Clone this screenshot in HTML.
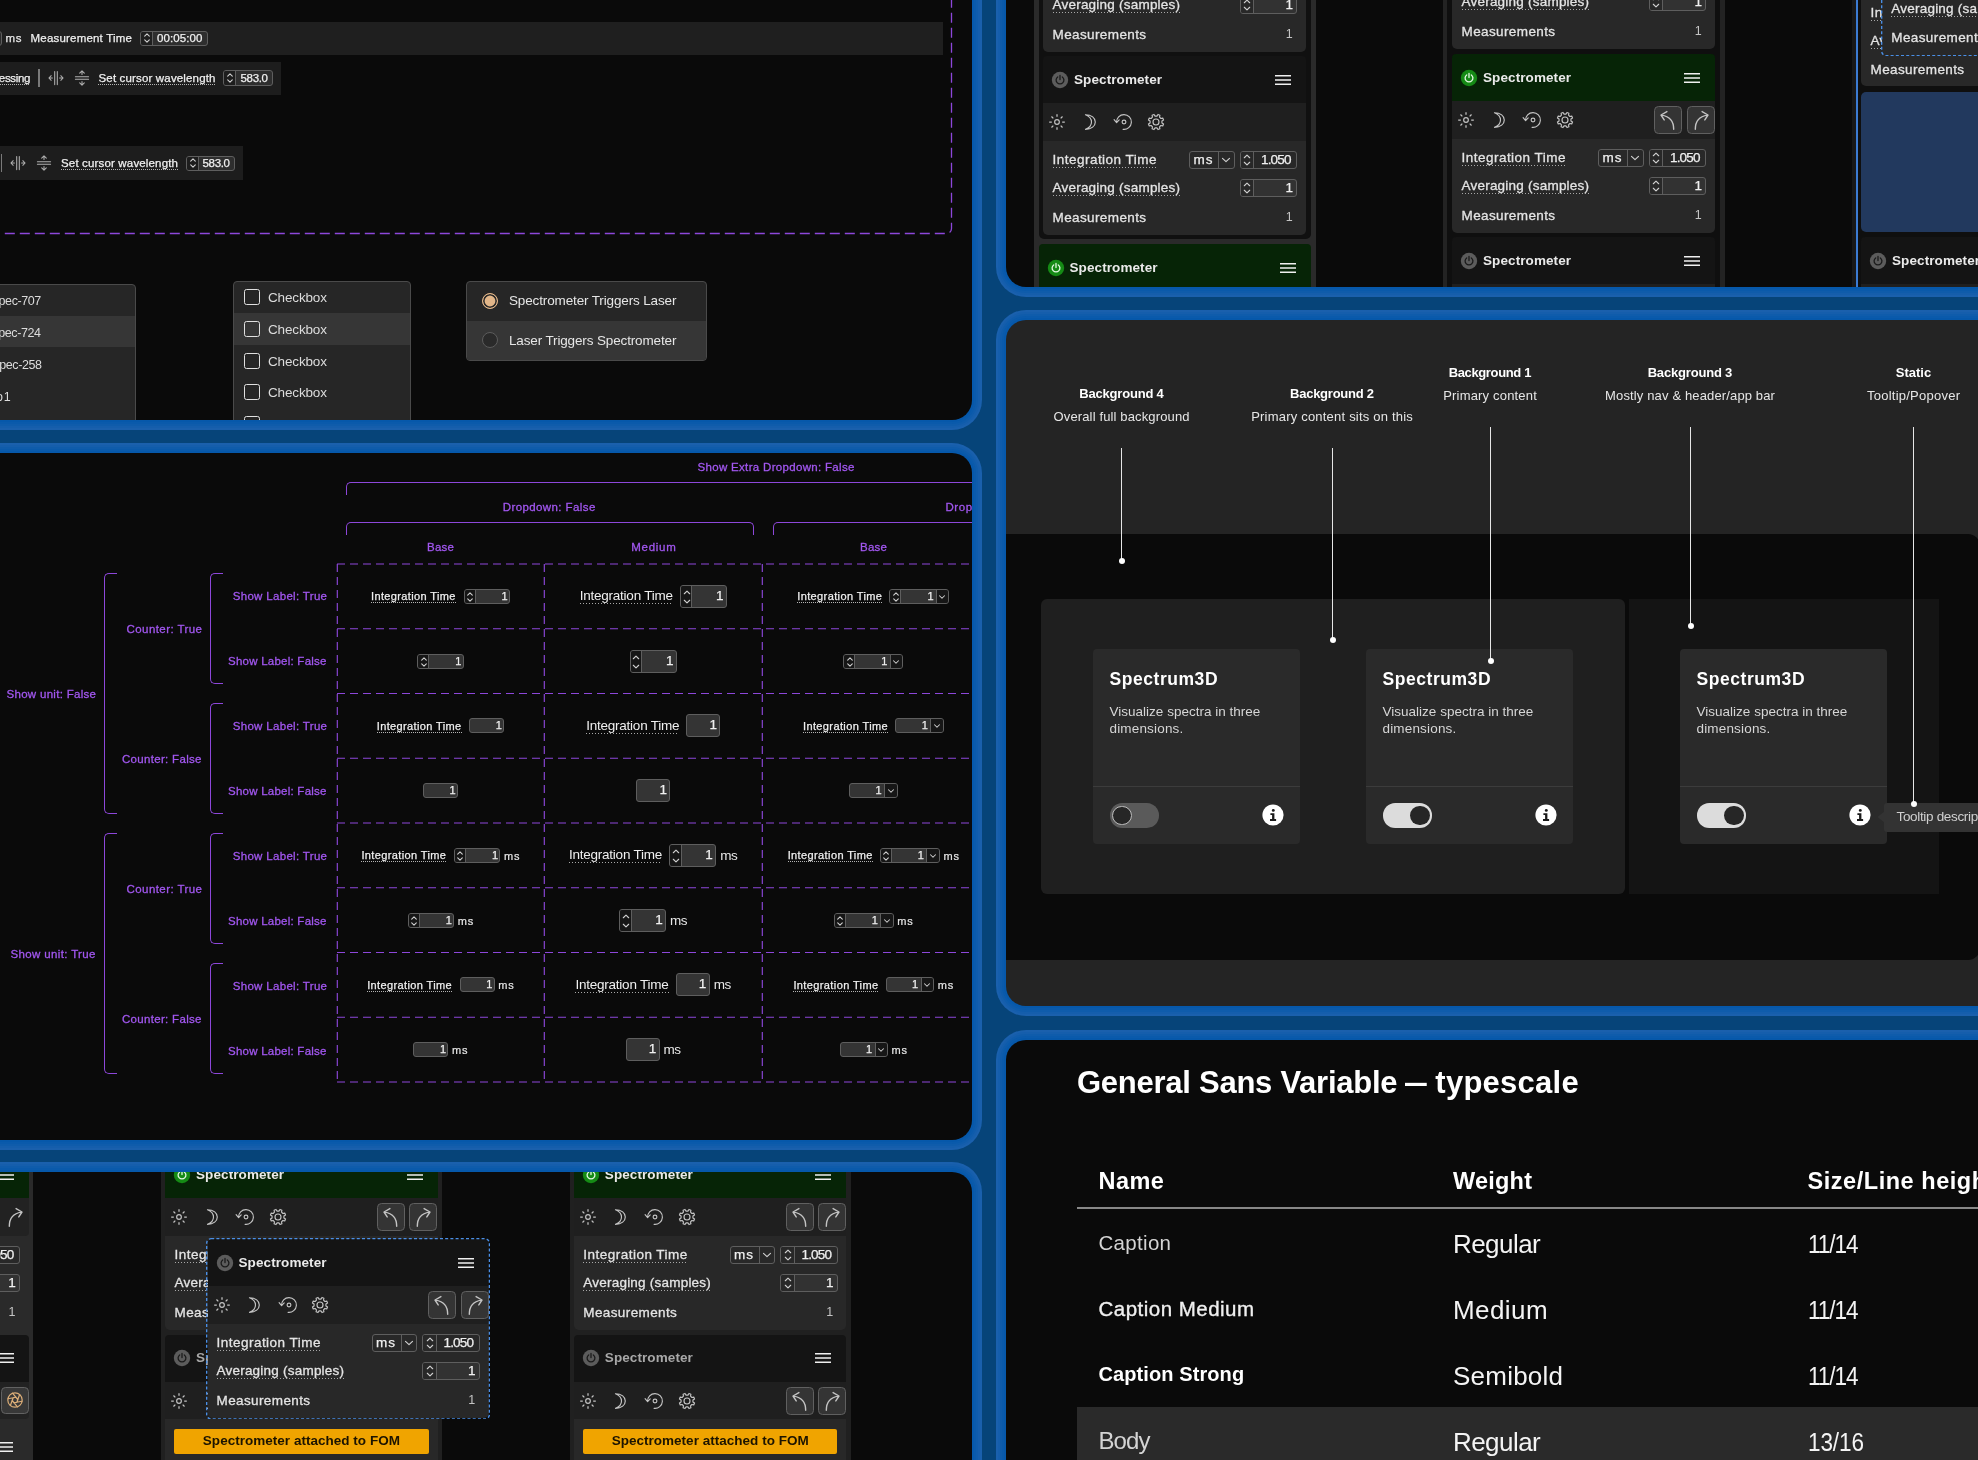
<!DOCTYPE html><html lang="en"><head><meta charset="utf-8"><title>Spectrometer UI kit</title><style>
html,body{margin:0;padding:0;}
body{width:1978px;height:1460px;overflow:hidden;background:#064479;position:relative;
font-family:"Liberation Sans",sans-serif;-webkit-font-smoothing:antialiased;}
.b{position:absolute;box-sizing:border-box;display:block;}
.t{position:absolute;white-space:nowrap;display:block;}
.p{position:absolute;box-sizing:border-box;overflow:hidden;border-radius:20px;}
.c{position:absolute;width:1978px;height:1460px;will-change:transform;}
</style></head><body><div class="p" style="left:-30px;top:-30px;width:1002px;height:450px;background:#0a0a0a;box-shadow:0 0 0 2px #0658aa,0 0 0 4px #0a5aab,0 0 0 6px #0f5cab,0 0 0 8px #155eac,0 0 0 10px #1a60ad;"><div class="c" style="left:30px;top:30px;"><svg class="b" style="left:-30px;top:-30px;" width="1000" height="280" viewBox="0 0 1000 280"><rect x="0.5" y="0.5" width="981" height="263" rx="5" fill="none" stroke="#8d47da" stroke-width="1.3" stroke-dasharray="10 5" stroke-dashoffset="4"/></svg><div class="b" style="left:-10px;top:21.5px;width:953px;height:33.7px;background:#1f1f1f;"></div><div class="b" style="left:-20px;top:31px;width:21.5px;height:15.2px;background:#2c2c2c;border-radius:3px;border:1px solid #5e5e5e;"></div><span class="t" style="left:5.5px;top:31.48px;font-size:11.5px;line-height:15px;color:#e8e8e8;-webkit-text-stroke:0.25px;letter-spacing:0.67px;">ms</span><span class="t" style="left:30.5px;top:31.48px;font-size:11.5px;line-height:15px;color:#f0f0f0;-webkit-text-stroke:0.25px;letter-spacing:0.2px;">Measurement Time</span><div class="b" style="left:140px;top:30.7px;width:67.5px;height:15.5px;background:#2e2e2e;border-radius:3px;border:1px solid #5e5e5e;"></div><div class="b" style="left:141px;top:31.7px;width:11.5px;height:13.5px;background:#1f1f1f;border-radius:2px 0 0 2px;border-right:1px solid #5e5e5e;"></div><svg class="b" style="left:138.55px;top:30.45px;" width="16" height="16" viewBox="-8 -8 16 16"><path d="M-2.3 -1.85L0 -4.15L2.3 -1.85M-2.3 1.85L0 4.15L2.3 1.85" stroke="#d0d0d0" stroke-width="1.1" fill="none" stroke-linecap="round" stroke-linejoin="round"/></svg><span class="t" style="left:157px;top:30.93px;font-size:11.5px;line-height:15px;color:#f0f0f0;-webkit-text-stroke:0.25px;letter-spacing:0.1px;">00:05:00</span><div class="b" style="left:-10px;top:61.5px;width:291px;height:33.3px;background:#1d1d1d;"></div><span class="t" style="left:-23.5px;top:70.98px;font-size:11.5px;line-height:15px;color:#f0f0f0;-webkit-text-stroke:0.25px;letter-spacing:-0.32px;">Processing</span><div class="b" style="left:-24px;top:84px;width:54px;height:1px;background:repeating-linear-gradient(90deg,#b4b4b4 0 1px,transparent 1px 2px);"></div><div class="b" style="left:38.4px;top:69px;width:1.4px;height:18px;background:#7a7a7a;"></div><svg class="b" style="left:44px;top:66.4px;" width="24" height="24" viewBox="-12 -12 24 24"><path d="M-1.3 -6.6V6.6M1.3 -6.6V6.6M-3.6 0H-7M-4.8 -2.3L-7.1 0L-4.8 2.3M3.6 0H7M4.8 -2.3L7.1 0L4.8 2.3" stroke="#b0b0b0" stroke-width="1.05" fill="none" stroke-linecap="round" stroke-linejoin="round"/></svg><svg class="b" style="left:69.7px;top:66.4px;" width="24" height="24" viewBox="-12 -12 24 24"><path d="M-1.3 -6.6V6.6M1.3 -6.6V6.6M-3.6 0H-7M-4.8 -2.3L-7.1 0L-4.8 2.3M3.6 0H7M4.8 -2.3L7.1 0L4.8 2.3" stroke="#b0b0b0" stroke-width="1.05" fill="none" stroke-linecap="round" stroke-linejoin="round" transform="rotate(90)"/></svg><span class="t" style="left:98.5px;top:70.98px;font-size:11.5px;line-height:15px;color:#f0f0f0;-webkit-text-stroke:0.25px;letter-spacing:0.16px;">Set cursor wavelength</span><div class="b" style="left:98px;top:84px;width:117px;height:1px;background:repeating-linear-gradient(90deg,#b4b4b4 0 1px,transparent 1px 2px);"></div><div class="b" style="left:223px;top:70.3px;width:50px;height:15.7px;background:#2e2e2e;border-radius:3px;border:1px solid #5e5e5e;"></div><div class="b" style="left:224px;top:71.3px;width:11.5px;height:13.7px;background:#1d1d1d;border-radius:2px 0 0 2px;border-right:1px solid #5e5e5e;"></div><svg class="b" style="left:221.55px;top:70.15px;" width="16" height="16" viewBox="-8 -8 16 16"><path d="M-2.3 -1.85L0 -4.15L2.3 -1.85M-2.3 1.85L0 4.15L2.3 1.85" stroke="#d0d0d0" stroke-width="1.1" fill="none" stroke-linecap="round" stroke-linejoin="round"/></svg><span class="t" style="left:240.5px;top:70.63px;font-size:11.5px;line-height:15px;color:#f0f0f0;-webkit-text-stroke:0.25px;letter-spacing:-0.32px;">583.0</span><div class="b" style="left:-10px;top:146.4px;width:253px;height:33.2px;background:#1d1d1d;"></div><div class="b" style="left:0.9px;top:154px;width:1.4px;height:18px;background:#7a7a7a;"></div><svg class="b" style="left:6.3px;top:151.4px;" width="24" height="24" viewBox="-12 -12 24 24"><path d="M-1.3 -6.6V6.6M1.3 -6.6V6.6M-3.6 0H-7M-4.8 -2.3L-7.1 0L-4.8 2.3M3.6 0H7M4.8 -2.3L7.1 0L4.8 2.3" stroke="#b0b0b0" stroke-width="1.05" fill="none" stroke-linecap="round" stroke-linejoin="round"/></svg><svg class="b" style="left:32px;top:151.4px;" width="24" height="24" viewBox="-12 -12 24 24"><path d="M-1.3 -6.6V6.6M1.3 -6.6V6.6M-3.6 0H-7M-4.8 -2.3L-7.1 0L-4.8 2.3M3.6 0H7M4.8 -2.3L7.1 0L4.8 2.3" stroke="#b0b0b0" stroke-width="1.05" fill="none" stroke-linecap="round" stroke-linejoin="round" transform="rotate(90)"/></svg><span class="t" style="left:61px;top:155.98px;font-size:11.5px;line-height:15px;color:#f0f0f0;-webkit-text-stroke:0.25px;letter-spacing:0.16px;">Set cursor wavelength</span><div class="b" style="left:61px;top:169px;width:117px;height:1px;background:repeating-linear-gradient(90deg,#b4b4b4 0 1px,transparent 1px 2px);"></div><div class="b" style="left:186px;top:155.5px;width:49px;height:15.7px;background:#2e2e2e;border-radius:3px;border:1px solid #5e5e5e;"></div><div class="b" style="left:187px;top:156.5px;width:11.5px;height:13.7px;background:#1d1d1d;border-radius:2px 0 0 2px;border-right:1px solid #5e5e5e;"></div><svg class="b" style="left:184.55px;top:155.35px;" width="16" height="16" viewBox="-8 -8 16 16"><path d="M-2.3 -1.85L0 -4.15L2.3 -1.85M-2.3 1.85L0 4.15L2.3 1.85" stroke="#d0d0d0" stroke-width="1.1" fill="none" stroke-linecap="round" stroke-linejoin="round"/></svg><span class="t" style="left:202.5px;top:155.83px;font-size:11.5px;line-height:15px;color:#f0f0f0;-webkit-text-stroke:0.25px;letter-spacing:-0.32px;">583.0</span><div class="b" style="left:-10px;top:284px;width:145.5px;height:170px;background:#262626;border-radius:4px;border:1px solid #4a4a4a;"></div><div class="b" style="left:-10px;top:315.8px;width:144.5px;height:31.7px;background:#363636;"></div><span class="t" style="left:-9.41px;top:293.48px;font-size:12.5px;line-height:16px;color:#dcdcdc;letter-spacing:-0.4px;">Spec-707</span><span class="t" style="left:-9.71px;top:325.18px;font-size:12.5px;line-height:16px;color:#dcdcdc;letter-spacing:-0.4px;">Spec-724</span><span class="t" style="left:-8.71px;top:356.88px;font-size:12.5px;line-height:16px;color:#dcdcdc;letter-spacing:-0.4px;">Spec-258</span><span class="t" style="left:-29.24px;top:388.58px;font-size:12.5px;line-height:16px;color:#dcdcdc;letter-spacing:-0.4px;">Demo</span><span class="t" style="left:3.65px;top:388.58px;font-size:12.5px;line-height:16px;color:#dcdcdc;">1</span><div class="b" style="left:232.5px;top:281px;width:178px;height:170px;background:#262626;border-radius:4px;border:1px solid #4a4a4a;"></div><div class="b" style="left:233.5px;top:313px;width:176px;height:31.7px;background:#363636;"></div><div class="b" style="left:244px;top:289.3px;width:16px;height:16px;border-radius:2.5px;border:1.5px solid #e0e0e0;"></div><span class="t" style="left:268px;top:289.38px;font-size:13.5px;line-height:18px;color:#dcdcdc;letter-spacing:-0.15px;">Checkbox</span><div class="b" style="left:244px;top:321px;width:16px;height:16px;border-radius:2.5px;border:1.5px solid #e0e0e0;"></div><span class="t" style="left:268px;top:321.08px;font-size:13.5px;line-height:18px;color:#dcdcdc;letter-spacing:-0.15px;">Checkbox</span><div class="b" style="left:244px;top:352.7px;width:16px;height:16px;border-radius:2.5px;border:1.5px solid #e0e0e0;"></div><span class="t" style="left:268px;top:352.78px;font-size:13.5px;line-height:18px;color:#dcdcdc;letter-spacing:-0.15px;">Checkbox</span><div class="b" style="left:244px;top:384.4px;width:16px;height:16px;border-radius:2.5px;border:1.5px solid #e0e0e0;"></div><span class="t" style="left:268px;top:384.48px;font-size:13.5px;line-height:18px;color:#dcdcdc;letter-spacing:-0.15px;">Checkbox</span><div class="b" style="left:244px;top:416.1px;width:16px;height:16px;border-radius:2.5px;border:1.5px solid #e0e0e0;"></div><span class="t" style="left:268px;top:416.18px;font-size:13.5px;line-height:18px;color:#dcdcdc;letter-spacing:-0.15px;">Checkbox</span><div class="b" style="left:466px;top:281px;width:241px;height:79.5px;background:#262626;border-radius:4px;border:1px solid #4a4a4a;"></div><div class="b" style="left:467px;top:320.5px;width:239px;height:39px;background:#363636;border-radius:0 0 3px 3px;"></div><div class="b" style="left:482px;top:292.5px;width:16px;height:16px;background:#e2b689;border-radius:8px;border:1.3px solid #e2b689;box-shadow:inset 0 0 0 1.6px #262626;"></div><div class="b" style="left:482px;top:332px;width:16px;height:16px;background:#2a2a2a;border-radius:8px;border:1.3px solid #5c5c5c;"></div><span class="t" style="left:509px;top:292.38px;font-size:13.5px;line-height:18px;color:#e6e6e6;letter-spacing:-0.14px;">Spectrometer Triggers Laser</span><span class="t" style="left:509px;top:331.88px;font-size:13.5px;line-height:18px;color:#e6e6e6;letter-spacing:-0.14px;">Laser Triggers Spectrometer</span></div></div><div class="p" style="left:-30px;top:453px;width:1002px;height:686.5px;background:#0a0a0a;box-shadow:0 0 0 2px #0658aa,0 0 0 4px #0a5aab,0 0 0 6px #0f5cab,0 0 0 8px #155eac,0 0 0 10px #1a60ad;"><div class="c" style="left:30px;top:-453px;"><span class="t" style="left:697.5px;top:459.68px;font-size:11.5px;line-height:15px;color:#a257f0;-webkit-text-stroke:0.3px;letter-spacing:0.32px;">Show Extra Dropdown: False</span><div class="b" style="left:346px;top:482px;width:754px;height:13px;border-radius:5px 0 0 0;border:1.2px solid #8d47da;border-bottom:none;border-right:none;"></div><span class="t" style="left:502.75px;top:499.68px;font-size:11.5px;line-height:15px;color:#a257f0;-webkit-text-stroke:0.3px;letter-spacing:0.4px;">Dropdown: False</span><div class="b" style="left:346px;top:522px;width:407.5px;height:13px;border-radius:5px 5px 0 0;border:1.2px solid #8d47da;border-bottom:none;"></div><div class="b" style="left:773px;top:522px;width:427px;height:13px;border-radius:5px 5px 0 0;border:1.2px solid #8d47da;border-bottom:none;"></div><span class="t" style="left:945.5px;top:499.68px;font-size:11.5px;line-height:15px;color:#a257f0;-webkit-text-stroke:0.3px;letter-spacing:0.55px;">Dropdown: True</span><span class="t" style="left:427px;top:539.68px;font-size:11.5px;line-height:15px;color:#a257f0;-webkit-text-stroke:0.3px;letter-spacing:0.26px;">Base</span><span class="t" style="left:631.25px;top:539.68px;font-size:11.5px;line-height:15px;color:#a257f0;-webkit-text-stroke:0.3px;letter-spacing:0.72px;">Medium</span><span class="t" style="left:860px;top:539.68px;font-size:11.5px;line-height:15px;color:#a257f0;-webkit-text-stroke:0.3px;letter-spacing:0.26px;">Base</span><svg class="b" style="left:0px;top:0px;" width="1000" height="1100" viewBox="0 0 1000 1100"><path d="M337 564H1000M337 628.75H1000M337 693.5H1000M337 758.25H1000M337 823H1000M337 887.75H1000M337 952.5H1000M337 1017.25H1000M337 1082H1000M337.3 564V1082M544.3 564V1082M762.3 564V1082" fill="none" stroke="#8d47da" stroke-width="1.15" stroke-dasharray="8 5"/></svg><div class="b" style="left:103.9px;top:573px;width:13px;height:240.5px;border-radius:5px 0 0 5px;border:1.2px solid #8d47da;border-right:none;"></div><span class="t" style="left:6.5px;top:686.78px;font-size:11.5px;line-height:15px;color:#a257f0;-webkit-text-stroke:0.3px;letter-spacing:0.3px;">Show unit: False</span><div class="b" style="left:209.5px;top:573px;width:13px;height:110.5px;border-radius:5px 0 0 5px;border:1.2px solid #8d47da;border-right:none;"></div><span class="t" style="left:126.5px;top:622.28px;font-size:11.5px;line-height:15px;color:#a257f0;-webkit-text-stroke:0.3px;letter-spacing:0.43px;">Counter: True</span><span class="t" style="left:232.7px;top:589.08px;font-size:11.5px;line-height:15px;color:#a257f0;-webkit-text-stroke:0.3px;letter-spacing:0.32px;">Show Label: True</span><span class="t" style="left:228px;top:653.98px;font-size:11.5px;line-height:15px;color:#a257f0;-webkit-text-stroke:0.3px;letter-spacing:0.24px;">Show Label: False</span><div class="b" style="left:209.5px;top:703px;width:13px;height:110.5px;border-radius:5px 0 0 5px;border:1.2px solid #8d47da;border-right:none;"></div><span class="t" style="left:122px;top:752.28px;font-size:11.5px;line-height:15px;color:#a257f0;-webkit-text-stroke:0.3px;letter-spacing:0.31px;">Counter: False</span><span class="t" style="left:232.7px;top:719.08px;font-size:11.5px;line-height:15px;color:#a257f0;-webkit-text-stroke:0.3px;letter-spacing:0.32px;">Show Label: True</span><span class="t" style="left:228px;top:783.98px;font-size:11.5px;line-height:15px;color:#a257f0;-webkit-text-stroke:0.3px;letter-spacing:0.24px;">Show Label: False</span><div class="b" style="left:103.9px;top:833px;width:13px;height:240.5px;border-radius:5px 0 0 5px;border:1.2px solid #8d47da;border-right:none;"></div><span class="t" style="left:10.5px;top:946.78px;font-size:11.5px;line-height:15px;color:#a257f0;-webkit-text-stroke:0.3px;letter-spacing:0.36px;">Show unit: True</span><div class="b" style="left:209.5px;top:833px;width:13px;height:110.5px;border-radius:5px 0 0 5px;border:1.2px solid #8d47da;border-right:none;"></div><span class="t" style="left:126.5px;top:882.28px;font-size:11.5px;line-height:15px;color:#a257f0;-webkit-text-stroke:0.3px;letter-spacing:0.43px;">Counter: True</span><span class="t" style="left:232.7px;top:849.08px;font-size:11.5px;line-height:15px;color:#a257f0;-webkit-text-stroke:0.3px;letter-spacing:0.32px;">Show Label: True</span><span class="t" style="left:228px;top:913.98px;font-size:11.5px;line-height:15px;color:#a257f0;-webkit-text-stroke:0.3px;letter-spacing:0.24px;">Show Label: False</span><div class="b" style="left:209.5px;top:963px;width:13px;height:110.5px;border-radius:5px 0 0 5px;border:1.2px solid #8d47da;border-right:none;"></div><span class="t" style="left:122px;top:1012.28px;font-size:11.5px;line-height:15px;color:#a257f0;-webkit-text-stroke:0.3px;letter-spacing:0.31px;">Counter: False</span><span class="t" style="left:232.7px;top:979.08px;font-size:11.5px;line-height:15px;color:#a257f0;-webkit-text-stroke:0.3px;letter-spacing:0.32px;">Show Label: True</span><span class="t" style="left:228px;top:1043.98px;font-size:11.5px;line-height:15px;color:#a257f0;-webkit-text-stroke:0.3px;letter-spacing:0.24px;">Show Label: False</span><span class="t" style="left:371px;top:589.28px;font-size:11px;line-height:14px;color:#f0f0f0;-webkit-text-stroke:0.25px;letter-spacing:0.37px;">Integration Time</span><div class="b" style="left:371px;top:602px;width:84.5px;height:1px;background:repeating-linear-gradient(90deg,#b4b4b4 0 1px,transparent 1px 2px);"></div><div class="b" style="left:463.5px;top:589px;width:46.5px;height:15px;background:#343434;border-radius:3px;border:1px solid #5e5e5e;"></div><div class="b" style="left:464.5px;top:590px;width:11px;height:13px;background:#161616;border-radius:2px 0 0 2px;border-right:1px solid #5e5e5e;"></div><svg class="b" style="left:461.8px;top:588.5px;" width="16" height="16" viewBox="-8 -8 16 16"><path d="M-2.3 -1.85L0 -4.15L2.3 -1.85M-2.3 1.85L0 4.15L2.3 1.85" stroke="#d0d0d0" stroke-width="1.1" fill="none" stroke-linecap="round" stroke-linejoin="round"/></svg><span class="t" style="left:501.48px;top:589.48px;font-size:11px;line-height:14px;color:#f0f0f0;-webkit-text-stroke:0.25px;">1</span><span class="t" style="left:579.65px;top:587.28px;font-size:13.5px;line-height:18px;color:#f0f0f0;letter-spacing:-0.23px;">Integration Time</span><div class="b" style="left:579.65px;top:603.36px;width:93.3px;height:1px;background:repeating-linear-gradient(90deg,#a8a8a8 0 1.3px,transparent 1.3px 3px);"></div><div class="b" style="left:679.95px;top:585px;width:47px;height:23px;background:#343434;border-radius:3px;border:1px solid #5e5e5e;"></div><div class="b" style="left:680.95px;top:586px;width:11.5px;height:21px;background:#161616;border-radius:2px 0 0 2px;border-right:1px solid #5e5e5e;"></div><svg class="b" style="left:678.5px;top:588.5px;" width="16" height="16" viewBox="-8 -8 16 16"><path d="M-2.7 -3.25L0 -5.95L2.7 -3.25M-2.7 3.25L0 5.95L2.7 3.25" stroke="#d0d0d0" stroke-width="1.1" fill="none" stroke-linecap="round" stroke-linejoin="round"/></svg><span class="t" style="left:716.04px;top:587.48px;font-size:13.5px;line-height:18px;color:#f0f0f0;-webkit-text-stroke:0.25px;">1</span><span class="t" style="left:797.2px;top:589.28px;font-size:11px;line-height:14px;color:#f0f0f0;-webkit-text-stroke:0.25px;letter-spacing:0.39px;">Integration Time</span><div class="b" style="left:797px;top:602px;width:84.7px;height:1px;background:repeating-linear-gradient(90deg,#b4b4b4 0 1px,transparent 1px 2px);"></div><div class="b" style="left:889.4px;top:589px;width:60px;height:15px;background:#343434;border-radius:3px;border:1px solid #5e5e5e;"></div><div class="b" style="left:890.4px;top:590px;width:11px;height:13px;background:#161616;border-radius:2px 0 0 2px;border-right:1px solid #5e5e5e;"></div><svg class="b" style="left:887.7px;top:588.5px;" width="16" height="16" viewBox="-8 -8 16 16"><path d="M-2.3 -1.85L0 -4.15L2.3 -1.85M-2.3 1.85L0 4.15L2.3 1.85" stroke="#d0d0d0" stroke-width="1.1" fill="none" stroke-linecap="round" stroke-linejoin="round"/></svg><div class="b" style="left:935.9px;top:590px;width:12.5px;height:13px;background:#161616;border-radius:0 2px 2px 0;border-left:1px solid #5e5e5e;"></div><svg class="b" style="left:934.45px;top:588.8px;" width="16" height="16" viewBox="-8 -8 16 16"><path d="M-2.5 -1.25L0 1.25L2.5 -1.25" stroke="#d0d0d0" stroke-width="1.05" fill="none" stroke-linecap="round" stroke-linejoin="round"/></svg><span class="t" style="left:927.38px;top:589.48px;font-size:11px;line-height:14px;color:#f0f0f0;-webkit-text-stroke:0.25px;">1</span><div class="b" style="left:417.25px;top:654px;width:46.5px;height:15px;background:#343434;border-radius:3px;border:1px solid #5e5e5e;"></div><div class="b" style="left:418.25px;top:655px;width:11px;height:13px;background:#161616;border-radius:2px 0 0 2px;border-right:1px solid #5e5e5e;"></div><svg class="b" style="left:415.55px;top:653.5px;" width="16" height="16" viewBox="-8 -8 16 16"><path d="M-2.3 -1.85L0 -4.15L2.3 -1.85M-2.3 1.85L0 4.15L2.3 1.85" stroke="#d0d0d0" stroke-width="1.1" fill="none" stroke-linecap="round" stroke-linejoin="round"/></svg><span class="t" style="left:455.23px;top:654.48px;font-size:11px;line-height:14px;color:#f0f0f0;-webkit-text-stroke:0.25px;">1</span><div class="b" style="left:629.8px;top:650px;width:47px;height:23px;background:#343434;border-radius:3px;border:1px solid #5e5e5e;"></div><div class="b" style="left:630.8px;top:651px;width:11.5px;height:21px;background:#161616;border-radius:2px 0 0 2px;border-right:1px solid #5e5e5e;"></div><svg class="b" style="left:628.35px;top:653.5px;" width="16" height="16" viewBox="-8 -8 16 16"><path d="M-2.7 -3.25L0 -5.95L2.7 -3.25M-2.7 3.25L0 5.95L2.7 3.25" stroke="#d0d0d0" stroke-width="1.1" fill="none" stroke-linecap="round" stroke-linejoin="round"/></svg><span class="t" style="left:665.89px;top:652.48px;font-size:13.5px;line-height:18px;color:#f0f0f0;-webkit-text-stroke:0.25px;">1</span><div class="b" style="left:843.3px;top:654px;width:60px;height:15px;background:#343434;border-radius:3px;border:1px solid #5e5e5e;"></div><div class="b" style="left:844.3px;top:655px;width:11px;height:13px;background:#161616;border-radius:2px 0 0 2px;border-right:1px solid #5e5e5e;"></div><svg class="b" style="left:841.6px;top:653.5px;" width="16" height="16" viewBox="-8 -8 16 16"><path d="M-2.3 -1.85L0 -4.15L2.3 -1.85M-2.3 1.85L0 4.15L2.3 1.85" stroke="#d0d0d0" stroke-width="1.1" fill="none" stroke-linecap="round" stroke-linejoin="round"/></svg><div class="b" style="left:889.8px;top:655px;width:12.5px;height:13px;background:#161616;border-radius:0 2px 2px 0;border-left:1px solid #5e5e5e;"></div><svg class="b" style="left:888.35px;top:653.8px;" width="16" height="16" viewBox="-8 -8 16 16"><path d="M-2.5 -1.25L0 1.25L2.5 -1.25" stroke="#d0d0d0" stroke-width="1.05" fill="none" stroke-linecap="round" stroke-linejoin="round"/></svg><span class="t" style="left:881.28px;top:654.48px;font-size:11px;line-height:14px;color:#f0f0f0;-webkit-text-stroke:0.25px;">1</span><span class="t" style="left:376.75px;top:718.78px;font-size:11px;line-height:14px;color:#f0f0f0;-webkit-text-stroke:0.25px;letter-spacing:0.37px;">Integration Time</span><div class="b" style="left:377px;top:732px;width:84.5px;height:1px;background:repeating-linear-gradient(90deg,#b4b4b4 0 1px,transparent 1px 2px);"></div><div class="b" style="left:469.25px;top:718px;width:35px;height:15px;background:#343434;border-radius:3px;border:1px solid #5e5e5e;"></div><span class="t" style="left:495.73px;top:718.48px;font-size:11px;line-height:14px;color:#f0f0f0;-webkit-text-stroke:0.25px;">1</span><span class="t" style="left:586.15px;top:716.78px;font-size:13.5px;line-height:18px;color:#f0f0f0;letter-spacing:-0.23px;">Integration Time</span><div class="b" style="left:586.15px;top:732.86px;width:93.3px;height:1px;background:repeating-linear-gradient(90deg,#a8a8a8 0 1.3px,transparent 1.3px 3px);"></div><div class="b" style="left:686.45px;top:714px;width:34px;height:23px;background:#343434;border-radius:3px;border:1px solid #5e5e5e;"></div><span class="t" style="left:709.54px;top:716.48px;font-size:13.5px;line-height:18px;color:#f0f0f0;-webkit-text-stroke:0.25px;">1</span><span class="t" style="left:802.95px;top:718.78px;font-size:11px;line-height:14px;color:#f0f0f0;-webkit-text-stroke:0.25px;letter-spacing:0.39px;">Integration Time</span><div class="b" style="left:803px;top:732px;width:84.7px;height:1px;background:repeating-linear-gradient(90deg,#b4b4b4 0 1px,transparent 1px 2px);"></div><div class="b" style="left:895.15px;top:718px;width:48.5px;height:15px;background:#343434;border-radius:3px;border:1px solid #5e5e5e;"></div><div class="b" style="left:930.15px;top:719px;width:12.5px;height:13px;background:#161616;border-radius:0 2px 2px 0;border-left:1px solid #5e5e5e;"></div><svg class="b" style="left:928.7px;top:717.8px;" width="16" height="16" viewBox="-8 -8 16 16"><path d="M-2.5 -1.25L0 1.25L2.5 -1.25" stroke="#d0d0d0" stroke-width="1.05" fill="none" stroke-linecap="round" stroke-linejoin="round"/></svg><span class="t" style="left:921.63px;top:718.48px;font-size:11px;line-height:14px;color:#f0f0f0;-webkit-text-stroke:0.25px;">1</span><div class="b" style="left:423px;top:783px;width:35px;height:15px;background:#343434;border-radius:3px;border:1px solid #5e5e5e;"></div><span class="t" style="left:449.48px;top:783.48px;font-size:11px;line-height:14px;color:#f0f0f0;-webkit-text-stroke:0.25px;">1</span><div class="b" style="left:636.3px;top:779px;width:34px;height:23px;background:#343434;border-radius:3px;border:1px solid #5e5e5e;"></div><span class="t" style="left:659.39px;top:781.48px;font-size:13.5px;line-height:18px;color:#f0f0f0;-webkit-text-stroke:0.25px;">1</span><div class="b" style="left:849.05px;top:783px;width:48.5px;height:15px;background:#343434;border-radius:3px;border:1px solid #5e5e5e;"></div><div class="b" style="left:884.05px;top:784px;width:12.5px;height:13px;background:#161616;border-radius:0 2px 2px 0;border-left:1px solid #5e5e5e;"></div><svg class="b" style="left:882.6px;top:782.8px;" width="16" height="16" viewBox="-8 -8 16 16"><path d="M-2.5 -1.25L0 1.25L2.5 -1.25" stroke="#d0d0d0" stroke-width="1.05" fill="none" stroke-linecap="round" stroke-linejoin="round"/></svg><span class="t" style="left:875.53px;top:783.48px;font-size:11px;line-height:14px;color:#f0f0f0;-webkit-text-stroke:0.25px;">1</span><span class="t" style="left:361.45px;top:848.28px;font-size:11px;line-height:14px;color:#f0f0f0;-webkit-text-stroke:0.25px;letter-spacing:0.37px;">Integration Time</span><div class="b" style="left:361px;top:861px;width:84.5px;height:1px;background:repeating-linear-gradient(90deg,#b4b4b4 0 1px,transparent 1px 2px);"></div><div class="b" style="left:453.95px;top:848px;width:46.5px;height:15px;background:#343434;border-radius:3px;border:1px solid #5e5e5e;"></div><div class="b" style="left:454.95px;top:849px;width:11px;height:13px;background:#161616;border-radius:2px 0 0 2px;border-right:1px solid #5e5e5e;"></div><svg class="b" style="left:452.25px;top:847.5px;" width="16" height="16" viewBox="-8 -8 16 16"><path d="M-2.3 -1.85L0 -4.15L2.3 -1.85M-2.3 1.85L0 4.15L2.3 1.85" stroke="#d0d0d0" stroke-width="1.1" fill="none" stroke-linecap="round" stroke-linejoin="round"/></svg><span class="t" style="left:491.93px;top:848.48px;font-size:11px;line-height:14px;color:#f0f0f0;-webkit-text-stroke:0.25px;">1</span><span class="t" style="left:504.05px;top:848.98px;font-size:11px;line-height:14px;color:#e8e8e8;-webkit-text-stroke:0.2px;letter-spacing:0.84px;">ms</span><span class="t" style="left:568.9px;top:846.28px;font-size:13.5px;line-height:18px;color:#f0f0f0;letter-spacing:-0.23px;">Integration Time</span><div class="b" style="left:568.9px;top:862.36px;width:93.3px;height:1px;background:repeating-linear-gradient(90deg,#a8a8a8 0 1.3px,transparent 1.3px 3px);"></div><div class="b" style="left:669.2px;top:844px;width:47px;height:23px;background:#343434;border-radius:3px;border:1px solid #5e5e5e;"></div><div class="b" style="left:670.2px;top:845px;width:11.5px;height:21px;background:#161616;border-radius:2px 0 0 2px;border-right:1px solid #5e5e5e;"></div><svg class="b" style="left:667.75px;top:847.5px;" width="16" height="16" viewBox="-8 -8 16 16"><path d="M-2.7 -3.25L0 -5.95L2.7 -3.25M-2.7 3.25L0 5.95L2.7 3.25" stroke="#d0d0d0" stroke-width="1.1" fill="none" stroke-linecap="round" stroke-linejoin="round"/></svg><span class="t" style="left:705.29px;top:846.48px;font-size:13.5px;line-height:18px;color:#f0f0f0;-webkit-text-stroke:0.25px;">1</span><span class="t" style="left:720.2px;top:846.98px;font-size:13.5px;line-height:18px;color:#e8e8e8;letter-spacing:-0.5px;">ms</span><span class="t" style="left:787.65px;top:848.28px;font-size:11px;line-height:14px;color:#f0f0f0;-webkit-text-stroke:0.25px;letter-spacing:0.39px;">Integration Time</span><div class="b" style="left:788px;top:861px;width:84.7px;height:1px;background:repeating-linear-gradient(90deg,#b4b4b4 0 1px,transparent 1px 2px);"></div><div class="b" style="left:879.85px;top:848px;width:60px;height:15px;background:#343434;border-radius:3px;border:1px solid #5e5e5e;"></div><div class="b" style="left:880.85px;top:849px;width:11px;height:13px;background:#161616;border-radius:2px 0 0 2px;border-right:1px solid #5e5e5e;"></div><svg class="b" style="left:878.15px;top:847.5px;" width="16" height="16" viewBox="-8 -8 16 16"><path d="M-2.3 -1.85L0 -4.15L2.3 -1.85M-2.3 1.85L0 4.15L2.3 1.85" stroke="#d0d0d0" stroke-width="1.1" fill="none" stroke-linecap="round" stroke-linejoin="round"/></svg><div class="b" style="left:926.35px;top:849px;width:12.5px;height:13px;background:#161616;border-radius:0 2px 2px 0;border-left:1px solid #5e5e5e;"></div><svg class="b" style="left:924.9px;top:847.8px;" width="16" height="16" viewBox="-8 -8 16 16"><path d="M-2.5 -1.25L0 1.25L2.5 -1.25" stroke="#d0d0d0" stroke-width="1.05" fill="none" stroke-linecap="round" stroke-linejoin="round"/></svg><span class="t" style="left:917.83px;top:848.48px;font-size:11px;line-height:14px;color:#f0f0f0;-webkit-text-stroke:0.25px;">1</span><span class="t" style="left:943.45px;top:848.98px;font-size:11px;line-height:14px;color:#e8e8e8;-webkit-text-stroke:0.2px;letter-spacing:0.84px;">ms</span><div class="b" style="left:407.7px;top:913px;width:46.5px;height:15px;background:#343434;border-radius:3px;border:1px solid #5e5e5e;"></div><div class="b" style="left:408.7px;top:914px;width:11px;height:13px;background:#161616;border-radius:2px 0 0 2px;border-right:1px solid #5e5e5e;"></div><svg class="b" style="left:406px;top:912.5px;" width="16" height="16" viewBox="-8 -8 16 16"><path d="M-2.3 -1.85L0 -4.15L2.3 -1.85M-2.3 1.85L0 4.15L2.3 1.85" stroke="#d0d0d0" stroke-width="1.1" fill="none" stroke-linecap="round" stroke-linejoin="round"/></svg><span class="t" style="left:445.68px;top:913.48px;font-size:11px;line-height:14px;color:#f0f0f0;-webkit-text-stroke:0.25px;">1</span><span class="t" style="left:457.8px;top:913.73px;font-size:11px;line-height:14px;color:#e8e8e8;-webkit-text-stroke:0.2px;letter-spacing:0.84px;">ms</span><div class="b" style="left:619.05px;top:909px;width:47px;height:23px;background:#343434;border-radius:3px;border:1px solid #5e5e5e;"></div><div class="b" style="left:620.05px;top:910px;width:11.5px;height:21px;background:#161616;border-radius:2px 0 0 2px;border-right:1px solid #5e5e5e;"></div><svg class="b" style="left:617.6px;top:912.5px;" width="16" height="16" viewBox="-8 -8 16 16"><path d="M-2.7 -3.25L0 -5.95L2.7 -3.25M-2.7 3.25L0 5.95L2.7 3.25" stroke="#d0d0d0" stroke-width="1.1" fill="none" stroke-linecap="round" stroke-linejoin="round"/></svg><span class="t" style="left:655.14px;top:911.48px;font-size:13.5px;line-height:18px;color:#f0f0f0;-webkit-text-stroke:0.25px;">1</span><span class="t" style="left:670.05px;top:911.73px;font-size:13.5px;line-height:18px;color:#e8e8e8;letter-spacing:-0.5px;">ms</span><div class="b" style="left:833.75px;top:913px;width:60px;height:15px;background:#343434;border-radius:3px;border:1px solid #5e5e5e;"></div><div class="b" style="left:834.75px;top:914px;width:11px;height:13px;background:#161616;border-radius:2px 0 0 2px;border-right:1px solid #5e5e5e;"></div><svg class="b" style="left:832.05px;top:912.5px;" width="16" height="16" viewBox="-8 -8 16 16"><path d="M-2.3 -1.85L0 -4.15L2.3 -1.85M-2.3 1.85L0 4.15L2.3 1.85" stroke="#d0d0d0" stroke-width="1.1" fill="none" stroke-linecap="round" stroke-linejoin="round"/></svg><div class="b" style="left:880.25px;top:914px;width:12.5px;height:13px;background:#161616;border-radius:0 2px 2px 0;border-left:1px solid #5e5e5e;"></div><svg class="b" style="left:878.8px;top:912.8px;" width="16" height="16" viewBox="-8 -8 16 16"><path d="M-2.5 -1.25L0 1.25L2.5 -1.25" stroke="#d0d0d0" stroke-width="1.05" fill="none" stroke-linecap="round" stroke-linejoin="round"/></svg><span class="t" style="left:871.73px;top:913.48px;font-size:11px;line-height:14px;color:#f0f0f0;-webkit-text-stroke:0.25px;">1</span><span class="t" style="left:897.35px;top:913.73px;font-size:11px;line-height:14px;color:#e8e8e8;-webkit-text-stroke:0.2px;letter-spacing:0.84px;">ms</span><span class="t" style="left:367.2px;top:977.78px;font-size:11px;line-height:14px;color:#f0f0f0;-webkit-text-stroke:0.25px;letter-spacing:0.37px;">Integration Time</span><div class="b" style="left:367px;top:991px;width:84.5px;height:1px;background:repeating-linear-gradient(90deg,#b4b4b4 0 1px,transparent 1px 2px);"></div><div class="b" style="left:459.7px;top:977px;width:35px;height:15px;background:#343434;border-radius:3px;border:1px solid #5e5e5e;"></div><span class="t" style="left:486.18px;top:977.48px;font-size:11px;line-height:14px;color:#f0f0f0;-webkit-text-stroke:0.25px;">1</span><span class="t" style="left:498.3px;top:978.48px;font-size:11px;line-height:14px;color:#e8e8e8;-webkit-text-stroke:0.2px;letter-spacing:0.84px;">ms</span><span class="t" style="left:575.4px;top:975.78px;font-size:13.5px;line-height:18px;color:#f0f0f0;letter-spacing:-0.23px;">Integration Time</span><div class="b" style="left:575.4px;top:991.86px;width:93.3px;height:1px;background:repeating-linear-gradient(90deg,#a8a8a8 0 1.3px,transparent 1.3px 3px);"></div><div class="b" style="left:675.7px;top:973px;width:34px;height:23px;background:#343434;border-radius:3px;border:1px solid #5e5e5e;"></div><span class="t" style="left:698.79px;top:975.48px;font-size:13.5px;line-height:18px;color:#f0f0f0;-webkit-text-stroke:0.25px;">1</span><span class="t" style="left:713.7px;top:976.48px;font-size:13.5px;line-height:18px;color:#e8e8e8;letter-spacing:-0.5px;">ms</span><span class="t" style="left:793.4px;top:977.78px;font-size:11px;line-height:14px;color:#f0f0f0;-webkit-text-stroke:0.25px;letter-spacing:0.39px;">Integration Time</span><div class="b" style="left:793px;top:991px;width:84.7px;height:1px;background:repeating-linear-gradient(90deg,#b4b4b4 0 1px,transparent 1px 2px);"></div><div class="b" style="left:885.6px;top:977px;width:48.5px;height:15px;background:#343434;border-radius:3px;border:1px solid #5e5e5e;"></div><div class="b" style="left:920.6px;top:978px;width:12.5px;height:13px;background:#161616;border-radius:0 2px 2px 0;border-left:1px solid #5e5e5e;"></div><svg class="b" style="left:919.15px;top:976.8px;" width="16" height="16" viewBox="-8 -8 16 16"><path d="M-2.5 -1.25L0 1.25L2.5 -1.25" stroke="#d0d0d0" stroke-width="1.05" fill="none" stroke-linecap="round" stroke-linejoin="round"/></svg><span class="t" style="left:912.08px;top:977.48px;font-size:11px;line-height:14px;color:#f0f0f0;-webkit-text-stroke:0.25px;">1</span><span class="t" style="left:937.7px;top:978.48px;font-size:11px;line-height:14px;color:#e8e8e8;-webkit-text-stroke:0.2px;letter-spacing:0.84px;">ms</span><div class="b" style="left:413.45px;top:1042px;width:35px;height:15px;background:#343434;border-radius:3px;border:1px solid #5e5e5e;"></div><span class="t" style="left:439.93px;top:1042.48px;font-size:11px;line-height:14px;color:#f0f0f0;-webkit-text-stroke:0.25px;">1</span><span class="t" style="left:452.05px;top:1043.23px;font-size:11px;line-height:14px;color:#e8e8e8;-webkit-text-stroke:0.2px;letter-spacing:0.84px;">ms</span><div class="b" style="left:625.55px;top:1038px;width:34px;height:23px;background:#343434;border-radius:3px;border:1px solid #5e5e5e;"></div><span class="t" style="left:648.64px;top:1040.48px;font-size:13.5px;line-height:18px;color:#f0f0f0;-webkit-text-stroke:0.25px;">1</span><span class="t" style="left:663.55px;top:1041.23px;font-size:13.5px;line-height:18px;color:#e8e8e8;letter-spacing:-0.5px;">ms</span><div class="b" style="left:839.5px;top:1042px;width:48.5px;height:15px;background:#343434;border-radius:3px;border:1px solid #5e5e5e;"></div><div class="b" style="left:874.5px;top:1043px;width:12.5px;height:13px;background:#161616;border-radius:0 2px 2px 0;border-left:1px solid #5e5e5e;"></div><svg class="b" style="left:873.05px;top:1041.8px;" width="16" height="16" viewBox="-8 -8 16 16"><path d="M-2.5 -1.25L0 1.25L2.5 -1.25" stroke="#d0d0d0" stroke-width="1.05" fill="none" stroke-linecap="round" stroke-linejoin="round"/></svg><span class="t" style="left:865.98px;top:1042.48px;font-size:11px;line-height:14px;color:#f0f0f0;-webkit-text-stroke:0.25px;">1</span><span class="t" style="left:891.6px;top:1043.23px;font-size:11px;line-height:14px;color:#e8e8e8;-webkit-text-stroke:0.2px;letter-spacing:0.84px;">ms</span></div></div><div class="p" style="left:-30px;top:1172px;width:1002px;height:318px;background:#0a0a0a;box-shadow:0 0 0 2px #0658aa,0 0 0 4px #0a5aab,0 0 0 6px #0f5cab,0 0 0 8px #155eac,0 0 0 10px #1a60ad;"><div class="c" style="left:30px;top:-1172px;"><div class="b" style="left:-260px;top:1160px;width:293.4px;height:320px;background:#2a2a2a;"></div><div class="b" style="left:-244px;top:1151px;width:272.7px;height:47px;background:#062406;border-radius:4px 4px 0 0;"></div><svg class="b" style="left:-238.6px;top:1162.5px;" width="24" height="24" viewBox="-12 -12 24 24"><circle r="8.2" fill="#158a15"/><path d="M-2.3 -3.1A3.9 3.9 0 1 0 2.3 -3.1M0 -4.6V-0.4" fill="none" stroke="#e4f8e4" stroke-width="1.3" stroke-linecap="round"/></svg><span class="t" style="left:-213px;top:1165.98px;font-size:13.5px;line-height:18px;color:#eaeaea;font-weight:700;letter-spacing:0.09px;">Spectrometer</span><svg class="b" style="left:-6.4px;top:1162.7px;" width="24" height="24" viewBox="-12 -12 24 24"><path d="M-8 -4.25H8M-8 0H8M-8 4.25H8" stroke="#f0f0f0" stroke-width="1.6" fill="none"/></svg><div class="b" style="left:-244px;top:1198px;width:272.7px;height:38px;background:#222;border-radius:0 0 4px 4px;"></div><svg class="b" style="left:2.7px;top:1205px;" width="24" height="24" viewBox="-12 -12 24 24"><path d="M5.7 9.2C5.7 2 2 -3.6 -6.4 -4.9M-1.1 -8.4L-7 -5L-3.8 -0.1" fill="none" stroke="#c4c4c4" stroke-width="1.4" stroke-linecap="round" stroke-linejoin="round" transform="scale(-1,1)"/></svg><span class="t" style="left:-234.5px;top:1245.98px;font-size:13.5px;line-height:18px;color:#e4e4e4;-webkit-text-stroke:0.3px;letter-spacing:0.48px;">Integration Time</span><div class="b" style="left:-234.5px;top:1262.06px;width:104px;height:1px;background:repeating-linear-gradient(90deg,#a8a8a8 0 1.3px,transparent 1.3px 3px);"></div><div class="b" style="left:-88.3px;top:1245.7px;width:45.5px;height:18.5px;background:#282828;border-radius:3px;border:1px solid #5e5e5e;"></div><div class="b" style="left:-59.3px;top:1246.7px;width:1px;height:16.5px;background:#5e5e5e;"></div><span class="t" style="left:-83.8px;top:1245.93px;font-size:13.5px;line-height:18px;color:#f0f0f0;-webkit-text-stroke:0.25px;letter-spacing:1px;">ms</span><svg class="b" style="left:-59px;top:1247.35px;" width="16" height="16" viewBox="-8 -8 16 16"><path d="M-3.5 -1.7L0 1.7L3.5 -1.7" stroke="#d0d0d0" stroke-width="1.15" fill="none" stroke-linecap="round" stroke-linejoin="round"/></svg><div class="b" style="left:-37.8px;top:1245.7px;width:57.5px;height:18.5px;background:#282828;border-radius:3px;border:1px solid #5e5e5e;"></div><div class="b" style="left:-36.8px;top:1246.7px;width:13.5px;height:16.5px;background:#282828;border-radius:2px 0 0 2px;border-right:1px solid #5e5e5e;"></div><svg class="b" style="left:-38.25px;top:1246.95px;" width="16" height="16" viewBox="-8 -8 16 16"><path d="M-2.7 -2.25L0 -4.95L2.7 -2.25M-2.7 2.25L0 4.95L2.7 2.25" stroke="#d0d0d0" stroke-width="1.1" fill="none" stroke-linecap="round" stroke-linejoin="round"/></svg><span class="t" style="left:-16.3px;top:1245.93px;font-size:13.5px;line-height:18px;color:#f0f0f0;-webkit-text-stroke:0.25px;letter-spacing:-0.82px;">1.050</span><span class="t" style="left:-234.5px;top:1273.98px;font-size:13.5px;line-height:18px;color:#e4e4e4;-webkit-text-stroke:0.3px;letter-spacing:0.22px;">Averaging (samples)</span><div class="b" style="left:-234.5px;top:1290.06px;width:127.5px;height:1px;background:repeating-linear-gradient(90deg,#a8a8a8 0 1.3px,transparent 1.3px 3px);"></div><div class="b" style="left:-37.8px;top:1273.7px;width:57.5px;height:18.5px;background:#323232;border-radius:3px;border:1px solid #5e5e5e;"></div><div class="b" style="left:-36.8px;top:1274.7px;width:13.5px;height:16.5px;background:#282828;border-radius:2px 0 0 2px;border-right:1px solid #5e5e5e;"></div><svg class="b" style="left:-38.25px;top:1274.95px;" width="16" height="16" viewBox="-8 -8 16 16"><path d="M-2.7 -2.25L0 -4.95L2.7 -2.25M-2.7 2.25L0 4.95L2.7 2.25" stroke="#d0d0d0" stroke-width="1.1" fill="none" stroke-linecap="round" stroke-linejoin="round"/></svg><span class="t" style="left:8.29px;top:1273.93px;font-size:13.5px;line-height:18px;color:#f0f0f0;-webkit-text-stroke:0.25px;">1</span><span class="t" style="left:-234.5px;top:1303.58px;font-size:13.5px;line-height:18px;color:#e4e4e4;-webkit-text-stroke:0.3px;letter-spacing:0.39px;">Measurements</span><span class="t" style="left:8.55px;top:1303.98px;font-size:12.5px;line-height:16px;color:#c4c4c4;">1</span><div class="b" style="left:-244px;top:1334.5px;width:272.7px;height:47px;background:#141414;border-radius:4px 4px 0 0;"></div><svg class="b" style="left:-238.6px;top:1346px;" width="24" height="24" viewBox="-12 -12 24 24"><circle r="8.2" fill="#5c5c5c"/><path d="M-2.3 -3.1A3.9 3.9 0 1 0 2.3 -3.1M0 -4.6V-0.4" fill="none" stroke="#1a1a1a" stroke-width="1.3" stroke-linecap="round"/></svg><span class="t" style="left:-213px;top:1349.48px;font-size:13.5px;line-height:18px;color:#eaeaea;font-weight:700;letter-spacing:0.09px;">Spectrometer</span><svg class="b" style="left:-6.4px;top:1346.2px;" width="24" height="24" viewBox="-12 -12 24 24"><path d="M-8 -4.25H8M-8 0H8M-8 4.25H8" stroke="#f0f0f0" stroke-width="1.6" fill="none"/></svg><div class="b" style="left:-244px;top:1381.5px;width:272.7px;height:37.5px;background:#222;border-radius:0 0 4px 4px;"></div><div class="b" style="left:1px;top:1386.5px;width:27.7px;height:27.7px;background:#383838;border-radius:4.5px;border:1px solid #626262;"></div><svg class="b" style="left:2.8px;top:1388.3px;" width="24" height="24" viewBox="-12 -12 24 24"><circle r="7.2" fill="none" stroke="#dcae78" stroke-width="1.2"/><path d="M7.09 1.25L-1.27 2.72M2.46 6.77L-2.99 0.26M-4.63 5.52L-1.72 -2.46M-7.09 -1.25L1.27 -2.72M-2.46 -6.77L2.99 -0.26M4.63 -5.52L1.72 2.46" stroke="#dcae78" stroke-width="1.2" fill="none" stroke-linecap="round"/></svg><svg class="b" style="left:-6.8px;top:1435px;" width="24" height="24" viewBox="-12 -12 24 24"><path d="M-8 -4.25H8M-8 0H8M-8 4.25H8" stroke="#f0f0f0" stroke-width="1.6" fill="none"/></svg><div class="b" style="left:160.7px;top:1160px;width:281.3px;height:320px;background:#202020;"></div><div class="b" style="left:165px;top:1151px;width:272.7px;height:47px;background:#062406;border-radius:4px 4px 0 0;"></div><svg class="b" style="left:170.4px;top:1162.5px;" width="24" height="24" viewBox="-12 -12 24 24"><circle r="8.2" fill="#158a15"/><path d="M-2.3 -3.1A3.9 3.9 0 1 0 2.3 -3.1M0 -4.6V-0.4" fill="none" stroke="#e4f8e4" stroke-width="1.3" stroke-linecap="round"/></svg><span class="t" style="left:196px;top:1165.98px;font-size:13.5px;line-height:18px;color:#eaeaea;font-weight:700;letter-spacing:0.09px;">Spectrometer</span><svg class="b" style="left:402.6px;top:1162.7px;" width="24" height="24" viewBox="-12 -12 24 24"><path d="M-8 -4.25H8M-8 0H8M-8 4.25H8" stroke="#f0f0f0" stroke-width="1.6" fill="none"/></svg><div class="b" style="left:165px;top:1198px;width:272.7px;height:37.5px;background:#1f1f1f;"></div><svg class="b" style="left:167px;top:1205px;" width="24" height="24" viewBox="-12 -12 24 24"><circle r="2.35" fill="none" stroke="#c4c4c4" stroke-width="1.15"/><path d="M5.2 0L7.8 0M3.68 3.68L5.52 5.52M0 5.2L0 7.8M-3.68 3.68L-5.52 5.52M-5.2 0L-7.8 0M-3.68 -3.68L-5.52 -5.52M0 -5.2L0 -7.8M3.68 -3.68L5.52 -5.52" stroke="#c4c4c4" stroke-width="1.25" stroke-linecap="butt" fill="none"/></svg><svg class="b" style="left:199.6px;top:1205px;" width="24" height="24" viewBox="-12 -12 24 24"><path d="M-4.5 -7.3C1.6 -7.3 5.3 -4 5.3 0C5.3 4 1.6 7.3 -4.5 7.3C-0.4 5.7 1.5 3 1.5 0C1.5 -3 -0.4 -5.7 -4.5 -7.3Z" fill="none" stroke="#c4c4c4" stroke-width="1.15" stroke-linejoin="round"/></svg><svg class="b" style="left:234px;top:1205px;" width="24" height="24" viewBox="-12 -12 24 24"><path d="M-7.4 0.4A7.4 7.4 0 1 1 -0.9 7.34M-9.9 -2.3L-7.4 0.6L-4.8 -2.1" fill="none" stroke="#c4c4c4" stroke-width="1.15" stroke-linecap="round" stroke-linejoin="round"/><circle r="1.9" fill="none" stroke="#c4c4c4" stroke-width="1.15"/></svg><svg class="b" style="left:265.9px;top:1205px;" width="24" height="24" viewBox="-12 -12 24 24"><path d="M5.83 -1.4L7.73 -1.04L7.73 1.04L5.83 1.4L5.12 3.13L6.2 4.73L4.73 6.2L3.13 5.12L1.4 5.83L1.04 7.73L-1.04 7.73L-1.4 5.83L-3.13 5.12L-4.73 6.2L-6.2 4.73L-5.12 3.13L-5.83 1.4L-7.73 1.04L-7.73 -1.04L-5.83 -1.4L-5.12 -3.13L-6.2 -4.73L-4.73 -6.2L-3.13 -5.12L-1.4 -5.83L-1.04 -7.73L1.04 -7.73L1.4 -5.83L3.13 -5.12L4.73 -6.2L6.2 -4.73L5.12 -3.13Z" fill="none" stroke="#c4c4c4" stroke-width="1.15" stroke-linejoin="round" transform="rotate(22.5)"/><circle r="3" fill="none" stroke="#c4c4c4" stroke-width="1.15"/></svg><div class="b" style="left:376.7px;top:1203px;width:28px;height:28px;background:#343434;border-radius:4.5px;border:1px solid #606060;"></div><svg class="b" style="left:378.7px;top:1205px;" width="24" height="24" viewBox="-12 -12 24 24"><path d="M5.7 9.2C5.7 2 2 -3.6 -6.4 -4.9M-1.1 -8.4L-7 -5L-3.8 -0.1" fill="none" stroke="#c4c4c4" stroke-width="1.4" stroke-linecap="round" stroke-linejoin="round"/></svg><div class="b" style="left:409.2px;top:1203px;width:28px;height:28px;background:#343434;border-radius:4.5px;border:1px solid #606060;"></div><svg class="b" style="left:411.2px;top:1205px;" width="24" height="24" viewBox="-12 -12 24 24"><path d="M5.7 9.2C5.7 2 2 -3.6 -6.4 -4.9M-1.1 -8.4L-7 -5L-3.8 -0.1" fill="none" stroke="#c4c4c4" stroke-width="1.4" stroke-linecap="round" stroke-linejoin="round" transform="scale(-1,1)"/></svg><div class="b" style="left:165px;top:1235.5px;width:272.7px;height:94px;background:#282828;border-radius:0 0 5px 5px;"></div><span class="t" style="left:174.5px;top:1245.98px;font-size:13.5px;line-height:18px;color:#e4e4e4;-webkit-text-stroke:0.3px;letter-spacing:0.48px;">Integration Time</span><div class="b" style="left:174.5px;top:1262.06px;width:104px;height:1px;background:repeating-linear-gradient(90deg,#a8a8a8 0 1.3px,transparent 1.3px 3px);"></div><div class="b" style="left:320.7px;top:1245.7px;width:45.5px;height:18.5px;background:#282828;border-radius:3px;border:1px solid #5e5e5e;"></div><div class="b" style="left:349.7px;top:1246.7px;width:1px;height:16.5px;background:#5e5e5e;"></div><span class="t" style="left:325.2px;top:1245.93px;font-size:13.5px;line-height:18px;color:#f0f0f0;-webkit-text-stroke:0.25px;letter-spacing:1px;">ms</span><svg class="b" style="left:350px;top:1247.35px;" width="16" height="16" viewBox="-8 -8 16 16"><path d="M-3.5 -1.7L0 1.7L3.5 -1.7" stroke="#d0d0d0" stroke-width="1.15" fill="none" stroke-linecap="round" stroke-linejoin="round"/></svg><div class="b" style="left:371.2px;top:1245.7px;width:57.5px;height:18.5px;background:#282828;border-radius:3px;border:1px solid #5e5e5e;"></div><div class="b" style="left:372.2px;top:1246.7px;width:13.5px;height:16.5px;background:#282828;border-radius:2px 0 0 2px;border-right:1px solid #5e5e5e;"></div><svg class="b" style="left:370.75px;top:1246.95px;" width="16" height="16" viewBox="-8 -8 16 16"><path d="M-2.7 -2.25L0 -4.95L2.7 -2.25M-2.7 2.25L0 4.95L2.7 2.25" stroke="#d0d0d0" stroke-width="1.1" fill="none" stroke-linecap="round" stroke-linejoin="round"/></svg><span class="t" style="left:392.7px;top:1245.93px;font-size:13.5px;line-height:18px;color:#f0f0f0;-webkit-text-stroke:0.25px;letter-spacing:-0.82px;">1.050</span><span class="t" style="left:174.5px;top:1273.98px;font-size:13.5px;line-height:18px;color:#e4e4e4;-webkit-text-stroke:0.3px;letter-spacing:0.22px;">Averaging (samples)</span><div class="b" style="left:174.5px;top:1290.06px;width:127.5px;height:1px;background:repeating-linear-gradient(90deg,#a8a8a8 0 1.3px,transparent 1.3px 3px);"></div><div class="b" style="left:371.2px;top:1273.7px;width:57.5px;height:18.5px;background:#323232;border-radius:3px;border:1px solid #5e5e5e;"></div><div class="b" style="left:372.2px;top:1274.7px;width:13.5px;height:16.5px;background:#282828;border-radius:2px 0 0 2px;border-right:1px solid #5e5e5e;"></div><svg class="b" style="left:370.75px;top:1274.95px;" width="16" height="16" viewBox="-8 -8 16 16"><path d="M-2.7 -2.25L0 -4.95L2.7 -2.25M-2.7 2.25L0 4.95L2.7 2.25" stroke="#d0d0d0" stroke-width="1.1" fill="none" stroke-linecap="round" stroke-linejoin="round"/></svg><span class="t" style="left:417.29px;top:1273.93px;font-size:13.5px;line-height:18px;color:#f0f0f0;-webkit-text-stroke:0.25px;">1</span><span class="t" style="left:174.5px;top:1303.58px;font-size:13.5px;line-height:18px;color:#e4e4e4;-webkit-text-stroke:0.3px;letter-spacing:0.39px;">Measurements</span><span class="t" style="left:417.55px;top:1303.98px;font-size:12.5px;line-height:16px;color:#c4c4c4;">1</span><div class="b" style="left:165px;top:1334.5px;width:272.7px;height:47px;background:#141414;border-radius:4px 4px 0 0;"></div><svg class="b" style="left:170.4px;top:1346px;" width="24" height="24" viewBox="-12 -12 24 24"><circle r="8.2" fill="#5c5c5c"/><path d="M-2.3 -3.1A3.9 3.9 0 1 0 2.3 -3.1M0 -4.6V-0.4" fill="none" stroke="#1a1a1a" stroke-width="1.3" stroke-linecap="round"/></svg><span class="t" style="left:196px;top:1349.48px;font-size:13.5px;line-height:18px;color:#a8a8a8;font-weight:700;letter-spacing:0.09px;">Spectrometer</span><svg class="b" style="left:402.6px;top:1346.2px;" width="24" height="24" viewBox="-12 -12 24 24"><path d="M-8 -4.25H8M-8 0H8M-8 4.25H8" stroke="#f0f0f0" stroke-width="1.6" fill="none"/></svg><div class="b" style="left:165px;top:1381.5px;width:272.7px;height:37.5px;background:#1f1f1f;"></div><svg class="b" style="left:167px;top:1388.5px;" width="24" height="24" viewBox="-12 -12 24 24"><circle r="2.35" fill="none" stroke="#c4c4c4" stroke-width="1.15"/><path d="M5.2 0L7.8 0M3.68 3.68L5.52 5.52M0 5.2L0 7.8M-3.68 3.68L-5.52 5.52M-5.2 0L-7.8 0M-3.68 -3.68L-5.52 -5.52M0 -5.2L0 -7.8M3.68 -3.68L5.52 -5.52" stroke="#c4c4c4" stroke-width="1.25" stroke-linecap="butt" fill="none"/></svg><svg class="b" style="left:199.6px;top:1388.5px;" width="24" height="24" viewBox="-12 -12 24 24"><path d="M-4.5 -7.3C1.6 -7.3 5.3 -4 5.3 0C5.3 4 1.6 7.3 -4.5 7.3C-0.4 5.7 1.5 3 1.5 0C1.5 -3 -0.4 -5.7 -4.5 -7.3Z" fill="none" stroke="#c4c4c4" stroke-width="1.15" stroke-linejoin="round"/></svg><svg class="b" style="left:234px;top:1388.5px;" width="24" height="24" viewBox="-12 -12 24 24"><path d="M-7.4 0.4A7.4 7.4 0 1 1 -0.9 7.34M-9.9 -2.3L-7.4 0.6L-4.8 -2.1" fill="none" stroke="#c4c4c4" stroke-width="1.15" stroke-linecap="round" stroke-linejoin="round"/><circle r="1.9" fill="none" stroke="#c4c4c4" stroke-width="1.15"/></svg><svg class="b" style="left:265.9px;top:1388.5px;" width="24" height="24" viewBox="-12 -12 24 24"><path d="M5.83 -1.4L7.73 -1.04L7.73 1.04L5.83 1.4L5.12 3.13L6.2 4.73L4.73 6.2L3.13 5.12L1.4 5.83L1.04 7.73L-1.04 7.73L-1.4 5.83L-3.13 5.12L-4.73 6.2L-6.2 4.73L-5.12 3.13L-5.83 1.4L-7.73 1.04L-7.73 -1.04L-5.83 -1.4L-5.12 -3.13L-6.2 -4.73L-4.73 -6.2L-3.13 -5.12L-1.4 -5.83L-1.04 -7.73L1.04 -7.73L1.4 -5.83L3.13 -5.12L4.73 -6.2L6.2 -4.73L5.12 -3.13Z" fill="none" stroke="#c4c4c4" stroke-width="1.15" stroke-linejoin="round" transform="rotate(22.5)"/><circle r="3" fill="none" stroke="#c4c4c4" stroke-width="1.15"/></svg><div class="b" style="left:376.7px;top:1386.5px;width:28px;height:28px;background:#343434;border-radius:4.5px;border:1px solid #606060;"></div><svg class="b" style="left:378.7px;top:1388.5px;" width="24" height="24" viewBox="-12 -12 24 24"><path d="M5.7 9.2C5.7 2 2 -3.6 -6.4 -4.9M-1.1 -8.4L-7 -5L-3.8 -0.1" fill="none" stroke="#c4c4c4" stroke-width="1.4" stroke-linecap="round" stroke-linejoin="round"/></svg><div class="b" style="left:409.2px;top:1386.5px;width:28px;height:28px;background:#343434;border-radius:4.5px;border:1px solid #606060;"></div><svg class="b" style="left:411.2px;top:1388.5px;" width="24" height="24" viewBox="-12 -12 24 24"><path d="M5.7 9.2C5.7 2 2 -3.6 -6.4 -4.9M-1.1 -8.4L-7 -5L-3.8 -0.1" fill="none" stroke="#c4c4c4" stroke-width="1.4" stroke-linecap="round" stroke-linejoin="round" transform="scale(-1,1)"/></svg><div class="b" style="left:165px;top:1419px;width:272.7px;height:94px;background:#282828;border-radius:0 0 5px 5px;"></div><div class="b" style="left:174px;top:1428.5px;width:254.7px;height:25.5px;background:#f0a400;border-radius:2px;"></div><span class="t" style="left:202.85px;top:1432.48px;font-size:13.5px;line-height:18px;color:#1c1400;font-weight:700;letter-spacing:0.02px;">Spectrometer attached to FOM</span><div class="b" style="left:569.5px;top:1160px;width:281.5px;height:320px;background:#202020;"></div><div class="b" style="left:573.8px;top:1151px;width:272.7px;height:47px;background:#062406;border-radius:4px 4px 0 0;"></div><svg class="b" style="left:579.2px;top:1162.5px;" width="24" height="24" viewBox="-12 -12 24 24"><circle r="8.2" fill="#158a15"/><path d="M-2.3 -3.1A3.9 3.9 0 1 0 2.3 -3.1M0 -4.6V-0.4" fill="none" stroke="#e4f8e4" stroke-width="1.3" stroke-linecap="round"/></svg><span class="t" style="left:604.8px;top:1165.98px;font-size:13.5px;line-height:18px;color:#eaeaea;font-weight:700;letter-spacing:0.09px;">Spectrometer</span><svg class="b" style="left:811.4px;top:1162.7px;" width="24" height="24" viewBox="-12 -12 24 24"><path d="M-8 -4.25H8M-8 0H8M-8 4.25H8" stroke="#f0f0f0" stroke-width="1.6" fill="none"/></svg><div class="b" style="left:573.8px;top:1198px;width:272.7px;height:37.5px;background:#1f1f1f;"></div><svg class="b" style="left:575.8px;top:1205px;" width="24" height="24" viewBox="-12 -12 24 24"><circle r="2.35" fill="none" stroke="#c4c4c4" stroke-width="1.15"/><path d="M5.2 0L7.8 0M3.68 3.68L5.52 5.52M0 5.2L0 7.8M-3.68 3.68L-5.52 5.52M-5.2 0L-7.8 0M-3.68 -3.68L-5.52 -5.52M0 -5.2L0 -7.8M3.68 -3.68L5.52 -5.52" stroke="#c4c4c4" stroke-width="1.25" stroke-linecap="butt" fill="none"/></svg><svg class="b" style="left:608.4px;top:1205px;" width="24" height="24" viewBox="-12 -12 24 24"><path d="M-4.5 -7.3C1.6 -7.3 5.3 -4 5.3 0C5.3 4 1.6 7.3 -4.5 7.3C-0.4 5.7 1.5 3 1.5 0C1.5 -3 -0.4 -5.7 -4.5 -7.3Z" fill="none" stroke="#c4c4c4" stroke-width="1.15" stroke-linejoin="round"/></svg><svg class="b" style="left:642.8px;top:1205px;" width="24" height="24" viewBox="-12 -12 24 24"><path d="M-7.4 0.4A7.4 7.4 0 1 1 -0.9 7.34M-9.9 -2.3L-7.4 0.6L-4.8 -2.1" fill="none" stroke="#c4c4c4" stroke-width="1.15" stroke-linecap="round" stroke-linejoin="round"/><circle r="1.9" fill="none" stroke="#c4c4c4" stroke-width="1.15"/></svg><svg class="b" style="left:674.7px;top:1205px;" width="24" height="24" viewBox="-12 -12 24 24"><path d="M5.83 -1.4L7.73 -1.04L7.73 1.04L5.83 1.4L5.12 3.13L6.2 4.73L4.73 6.2L3.13 5.12L1.4 5.83L1.04 7.73L-1.04 7.73L-1.4 5.83L-3.13 5.12L-4.73 6.2L-6.2 4.73L-5.12 3.13L-5.83 1.4L-7.73 1.04L-7.73 -1.04L-5.83 -1.4L-5.12 -3.13L-6.2 -4.73L-4.73 -6.2L-3.13 -5.12L-1.4 -5.83L-1.04 -7.73L1.04 -7.73L1.4 -5.83L3.13 -5.12L4.73 -6.2L6.2 -4.73L5.12 -3.13Z" fill="none" stroke="#c4c4c4" stroke-width="1.15" stroke-linejoin="round" transform="rotate(22.5)"/><circle r="3" fill="none" stroke="#c4c4c4" stroke-width="1.15"/></svg><div class="b" style="left:785.5px;top:1203px;width:28px;height:28px;background:#343434;border-radius:4.5px;border:1px solid #606060;"></div><svg class="b" style="left:787.5px;top:1205px;" width="24" height="24" viewBox="-12 -12 24 24"><path d="M5.7 9.2C5.7 2 2 -3.6 -6.4 -4.9M-1.1 -8.4L-7 -5L-3.8 -0.1" fill="none" stroke="#c4c4c4" stroke-width="1.4" stroke-linecap="round" stroke-linejoin="round"/></svg><div class="b" style="left:818px;top:1203px;width:28px;height:28px;background:#343434;border-radius:4.5px;border:1px solid #606060;"></div><svg class="b" style="left:820px;top:1205px;" width="24" height="24" viewBox="-12 -12 24 24"><path d="M5.7 9.2C5.7 2 2 -3.6 -6.4 -4.9M-1.1 -8.4L-7 -5L-3.8 -0.1" fill="none" stroke="#c4c4c4" stroke-width="1.4" stroke-linecap="round" stroke-linejoin="round" transform="scale(-1,1)"/></svg><div class="b" style="left:573.8px;top:1235.5px;width:272.7px;height:94px;background:#282828;border-radius:0 0 5px 5px;"></div><span class="t" style="left:583.3px;top:1245.98px;font-size:13.5px;line-height:18px;color:#e4e4e4;-webkit-text-stroke:0.3px;letter-spacing:0.48px;">Integration Time</span><div class="b" style="left:583.3px;top:1262.06px;width:104px;height:1px;background:repeating-linear-gradient(90deg,#a8a8a8 0 1.3px,transparent 1.3px 3px);"></div><div class="b" style="left:729.5px;top:1245.7px;width:45.5px;height:18.5px;background:#282828;border-radius:3px;border:1px solid #5e5e5e;"></div><div class="b" style="left:758.5px;top:1246.7px;width:1px;height:16.5px;background:#5e5e5e;"></div><span class="t" style="left:734px;top:1245.93px;font-size:13.5px;line-height:18px;color:#f0f0f0;-webkit-text-stroke:0.25px;letter-spacing:1px;">ms</span><svg class="b" style="left:758.8px;top:1247.35px;" width="16" height="16" viewBox="-8 -8 16 16"><path d="M-3.5 -1.7L0 1.7L3.5 -1.7" stroke="#d0d0d0" stroke-width="1.15" fill="none" stroke-linecap="round" stroke-linejoin="round"/></svg><div class="b" style="left:780px;top:1245.7px;width:57.5px;height:18.5px;background:#282828;border-radius:3px;border:1px solid #5e5e5e;"></div><div class="b" style="left:781px;top:1246.7px;width:13.5px;height:16.5px;background:#282828;border-radius:2px 0 0 2px;border-right:1px solid #5e5e5e;"></div><svg class="b" style="left:779.55px;top:1246.95px;" width="16" height="16" viewBox="-8 -8 16 16"><path d="M-2.7 -2.25L0 -4.95L2.7 -2.25M-2.7 2.25L0 4.95L2.7 2.25" stroke="#d0d0d0" stroke-width="1.1" fill="none" stroke-linecap="round" stroke-linejoin="round"/></svg><span class="t" style="left:801.5px;top:1245.93px;font-size:13.5px;line-height:18px;color:#f0f0f0;-webkit-text-stroke:0.25px;letter-spacing:-0.82px;">1.050</span><span class="t" style="left:583.3px;top:1273.98px;font-size:13.5px;line-height:18px;color:#e4e4e4;-webkit-text-stroke:0.3px;letter-spacing:0.22px;">Averaging (samples)</span><div class="b" style="left:583.3px;top:1290.06px;width:127.5px;height:1px;background:repeating-linear-gradient(90deg,#a8a8a8 0 1.3px,transparent 1.3px 3px);"></div><div class="b" style="left:780px;top:1273.7px;width:57.5px;height:18.5px;background:#323232;border-radius:3px;border:1px solid #5e5e5e;"></div><div class="b" style="left:781px;top:1274.7px;width:13.5px;height:16.5px;background:#282828;border-radius:2px 0 0 2px;border-right:1px solid #5e5e5e;"></div><svg class="b" style="left:779.55px;top:1274.95px;" width="16" height="16" viewBox="-8 -8 16 16"><path d="M-2.7 -2.25L0 -4.95L2.7 -2.25M-2.7 2.25L0 4.95L2.7 2.25" stroke="#d0d0d0" stroke-width="1.1" fill="none" stroke-linecap="round" stroke-linejoin="round"/></svg><span class="t" style="left:826.09px;top:1273.93px;font-size:13.5px;line-height:18px;color:#f0f0f0;-webkit-text-stroke:0.25px;">1</span><span class="t" style="left:583.3px;top:1303.58px;font-size:13.5px;line-height:18px;color:#e4e4e4;-webkit-text-stroke:0.3px;letter-spacing:0.39px;">Measurements</span><span class="t" style="left:826.35px;top:1303.98px;font-size:12.5px;line-height:16px;color:#c4c4c4;">1</span><div class="b" style="left:573.8px;top:1334.5px;width:272.7px;height:47px;background:#141414;border-radius:4px 4px 0 0;"></div><svg class="b" style="left:579.2px;top:1346px;" width="24" height="24" viewBox="-12 -12 24 24"><circle r="8.2" fill="#5c5c5c"/><path d="M-2.3 -3.1A3.9 3.9 0 1 0 2.3 -3.1M0 -4.6V-0.4" fill="none" stroke="#1a1a1a" stroke-width="1.3" stroke-linecap="round"/></svg><span class="t" style="left:604.8px;top:1349.48px;font-size:13.5px;line-height:18px;color:#a8a8a8;font-weight:700;letter-spacing:0.09px;">Spectrometer</span><svg class="b" style="left:811.4px;top:1346.2px;" width="24" height="24" viewBox="-12 -12 24 24"><path d="M-8 -4.25H8M-8 0H8M-8 4.25H8" stroke="#f0f0f0" stroke-width="1.6" fill="none"/></svg><div class="b" style="left:573.8px;top:1381.5px;width:272.7px;height:37.5px;background:#1f1f1f;"></div><svg class="b" style="left:575.8px;top:1388.5px;" width="24" height="24" viewBox="-12 -12 24 24"><circle r="2.35" fill="none" stroke="#c4c4c4" stroke-width="1.15"/><path d="M5.2 0L7.8 0M3.68 3.68L5.52 5.52M0 5.2L0 7.8M-3.68 3.68L-5.52 5.52M-5.2 0L-7.8 0M-3.68 -3.68L-5.52 -5.52M0 -5.2L0 -7.8M3.68 -3.68L5.52 -5.52" stroke="#c4c4c4" stroke-width="1.25" stroke-linecap="butt" fill="none"/></svg><svg class="b" style="left:608.4px;top:1388.5px;" width="24" height="24" viewBox="-12 -12 24 24"><path d="M-4.5 -7.3C1.6 -7.3 5.3 -4 5.3 0C5.3 4 1.6 7.3 -4.5 7.3C-0.4 5.7 1.5 3 1.5 0C1.5 -3 -0.4 -5.7 -4.5 -7.3Z" fill="none" stroke="#c4c4c4" stroke-width="1.15" stroke-linejoin="round"/></svg><svg class="b" style="left:642.8px;top:1388.5px;" width="24" height="24" viewBox="-12 -12 24 24"><path d="M-7.4 0.4A7.4 7.4 0 1 1 -0.9 7.34M-9.9 -2.3L-7.4 0.6L-4.8 -2.1" fill="none" stroke="#c4c4c4" stroke-width="1.15" stroke-linecap="round" stroke-linejoin="round"/><circle r="1.9" fill="none" stroke="#c4c4c4" stroke-width="1.15"/></svg><svg class="b" style="left:674.7px;top:1388.5px;" width="24" height="24" viewBox="-12 -12 24 24"><path d="M5.83 -1.4L7.73 -1.04L7.73 1.04L5.83 1.4L5.12 3.13L6.2 4.73L4.73 6.2L3.13 5.12L1.4 5.83L1.04 7.73L-1.04 7.73L-1.4 5.83L-3.13 5.12L-4.73 6.2L-6.2 4.73L-5.12 3.13L-5.83 1.4L-7.73 1.04L-7.73 -1.04L-5.83 -1.4L-5.12 -3.13L-6.2 -4.73L-4.73 -6.2L-3.13 -5.12L-1.4 -5.83L-1.04 -7.73L1.04 -7.73L1.4 -5.83L3.13 -5.12L4.73 -6.2L6.2 -4.73L5.12 -3.13Z" fill="none" stroke="#c4c4c4" stroke-width="1.15" stroke-linejoin="round" transform="rotate(22.5)"/><circle r="3" fill="none" stroke="#c4c4c4" stroke-width="1.15"/></svg><div class="b" style="left:785.5px;top:1386.5px;width:28px;height:28px;background:#343434;border-radius:4.5px;border:1px solid #606060;"></div><svg class="b" style="left:787.5px;top:1388.5px;" width="24" height="24" viewBox="-12 -12 24 24"><path d="M5.7 9.2C5.7 2 2 -3.6 -6.4 -4.9M-1.1 -8.4L-7 -5L-3.8 -0.1" fill="none" stroke="#c4c4c4" stroke-width="1.4" stroke-linecap="round" stroke-linejoin="round"/></svg><div class="b" style="left:818px;top:1386.5px;width:28px;height:28px;background:#343434;border-radius:4.5px;border:1px solid #606060;"></div><svg class="b" style="left:820px;top:1388.5px;" width="24" height="24" viewBox="-12 -12 24 24"><path d="M5.7 9.2C5.7 2 2 -3.6 -6.4 -4.9M-1.1 -8.4L-7 -5L-3.8 -0.1" fill="none" stroke="#c4c4c4" stroke-width="1.4" stroke-linecap="round" stroke-linejoin="round" transform="scale(-1,1)"/></svg><div class="b" style="left:573.8px;top:1419px;width:272.7px;height:94px;background:#282828;border-radius:0 0 5px 5px;"></div><div class="b" style="left:582.8px;top:1428.5px;width:254.7px;height:25.5px;background:#f0a400;border-radius:2px;"></div><span class="t" style="left:611.65px;top:1432.48px;font-size:13.5px;line-height:18px;color:#1c1400;font-weight:700;letter-spacing:0.02px;">Spectrometer attached to FOM</span><div class="b" style="left:207.5px;top:1239px;width:281.5px;height:179px;background:#282828;border-radius:5px;"></div><div class="b" style="left:207.5px;top:1239px;width:281.5px;height:47px;background:#141414;border-radius:4px 4px 0 0;"></div><svg class="b" style="left:212.9px;top:1250.5px;" width="24" height="24" viewBox="-12 -12 24 24"><circle r="8.2" fill="#5c5c5c"/><path d="M-2.3 -3.1A3.9 3.9 0 1 0 2.3 -3.1M0 -4.6V-0.4" fill="none" stroke="#1a1a1a" stroke-width="1.3" stroke-linecap="round"/></svg><span class="t" style="left:238.5px;top:1253.98px;font-size:13.5px;line-height:18px;color:#eaeaea;font-weight:700;letter-spacing:0.09px;">Spectrometer</span><svg class="b" style="left:453.9px;top:1250.7px;" width="24" height="24" viewBox="-12 -12 24 24"><path d="M-8 -4.25H8M-8 0H8M-8 4.25H8" stroke="#f0f0f0" stroke-width="1.6" fill="none"/></svg><div class="b" style="left:207.5px;top:1286px;width:281.5px;height:37.5px;background:#1f1f1f;"></div><svg class="b" style="left:209.5px;top:1293px;" width="24" height="24" viewBox="-12 -12 24 24"><circle r="2.35" fill="none" stroke="#c4c4c4" stroke-width="1.15"/><path d="M5.2 0L7.8 0M3.68 3.68L5.52 5.52M0 5.2L0 7.8M-3.68 3.68L-5.52 5.52M-5.2 0L-7.8 0M-3.68 -3.68L-5.52 -5.52M0 -5.2L0 -7.8M3.68 -3.68L5.52 -5.52" stroke="#c4c4c4" stroke-width="1.25" stroke-linecap="butt" fill="none"/></svg><svg class="b" style="left:242.1px;top:1293px;" width="24" height="24" viewBox="-12 -12 24 24"><path d="M-4.5 -7.3C1.6 -7.3 5.3 -4 5.3 0C5.3 4 1.6 7.3 -4.5 7.3C-0.4 5.7 1.5 3 1.5 0C1.5 -3 -0.4 -5.7 -4.5 -7.3Z" fill="none" stroke="#c4c4c4" stroke-width="1.15" stroke-linejoin="round"/></svg><svg class="b" style="left:276.5px;top:1293px;" width="24" height="24" viewBox="-12 -12 24 24"><path d="M-7.4 0.4A7.4 7.4 0 1 1 -0.9 7.34M-9.9 -2.3L-7.4 0.6L-4.8 -2.1" fill="none" stroke="#c4c4c4" stroke-width="1.15" stroke-linecap="round" stroke-linejoin="round"/><circle r="1.9" fill="none" stroke="#c4c4c4" stroke-width="1.15"/></svg><svg class="b" style="left:308.4px;top:1293px;" width="24" height="24" viewBox="-12 -12 24 24"><path d="M5.83 -1.4L7.73 -1.04L7.73 1.04L5.83 1.4L5.12 3.13L6.2 4.73L4.73 6.2L3.13 5.12L1.4 5.83L1.04 7.73L-1.04 7.73L-1.4 5.83L-3.13 5.12L-4.73 6.2L-6.2 4.73L-5.12 3.13L-5.83 1.4L-7.73 1.04L-7.73 -1.04L-5.83 -1.4L-5.12 -3.13L-6.2 -4.73L-4.73 -6.2L-3.13 -5.12L-1.4 -5.83L-1.04 -7.73L1.04 -7.73L1.4 -5.83L3.13 -5.12L4.73 -6.2L6.2 -4.73L5.12 -3.13Z" fill="none" stroke="#c4c4c4" stroke-width="1.15" stroke-linejoin="round" transform="rotate(22.5)"/><circle r="3" fill="none" stroke="#c4c4c4" stroke-width="1.15"/></svg><div class="b" style="left:428px;top:1291px;width:28px;height:28px;background:#343434;border-radius:4.5px;border:1px solid #606060;"></div><svg class="b" style="left:430px;top:1293px;" width="24" height="24" viewBox="-12 -12 24 24"><path d="M5.7 9.2C5.7 2 2 -3.6 -6.4 -4.9M-1.1 -8.4L-7 -5L-3.8 -0.1" fill="none" stroke="#c4c4c4" stroke-width="1.4" stroke-linecap="round" stroke-linejoin="round"/></svg><div class="b" style="left:460.5px;top:1291px;width:28px;height:28px;background:#343434;border-radius:4.5px;border:1px solid #606060;"></div><svg class="b" style="left:462.5px;top:1293px;" width="24" height="24" viewBox="-12 -12 24 24"><path d="M5.7 9.2C5.7 2 2 -3.6 -6.4 -4.9M-1.1 -8.4L-7 -5L-3.8 -0.1" fill="none" stroke="#c4c4c4" stroke-width="1.4" stroke-linecap="round" stroke-linejoin="round" transform="scale(-1,1)"/></svg><span class="t" style="left:216.5px;top:1333.98px;font-size:13.5px;line-height:18px;color:#e4e4e4;-webkit-text-stroke:0.3px;letter-spacing:0.48px;">Integration Time</span><div class="b" style="left:216.5px;top:1350.06px;width:104px;height:1px;background:repeating-linear-gradient(90deg,#a8a8a8 0 1.3px,transparent 1.3px 3px);"></div><div class="b" style="left:371.5px;top:1333.7px;width:45.5px;height:18.5px;background:#282828;border-radius:3px;border:1px solid #5e5e5e;"></div><div class="b" style="left:400.5px;top:1334.7px;width:1px;height:16.5px;background:#5e5e5e;"></div><span class="t" style="left:376px;top:1333.93px;font-size:13.5px;line-height:18px;color:#f0f0f0;-webkit-text-stroke:0.25px;letter-spacing:1px;">ms</span><svg class="b" style="left:400.8px;top:1335.35px;" width="16" height="16" viewBox="-8 -8 16 16"><path d="M-3.5 -1.7L0 1.7L3.5 -1.7" stroke="#d0d0d0" stroke-width="1.15" fill="none" stroke-linecap="round" stroke-linejoin="round"/></svg><div class="b" style="left:422px;top:1333.7px;width:57.5px;height:18.5px;background:#282828;border-radius:3px;border:1px solid #5e5e5e;"></div><div class="b" style="left:423px;top:1334.7px;width:13.5px;height:16.5px;background:#282828;border-radius:2px 0 0 2px;border-right:1px solid #5e5e5e;"></div><svg class="b" style="left:421.55px;top:1334.95px;" width="16" height="16" viewBox="-8 -8 16 16"><path d="M-2.7 -2.25L0 -4.95L2.7 -2.25M-2.7 2.25L0 4.95L2.7 2.25" stroke="#d0d0d0" stroke-width="1.1" fill="none" stroke-linecap="round" stroke-linejoin="round"/></svg><span class="t" style="left:443.5px;top:1333.93px;font-size:13.5px;line-height:18px;color:#f0f0f0;-webkit-text-stroke:0.25px;letter-spacing:-0.82px;">1.050</span><span class="t" style="left:216.5px;top:1361.98px;font-size:13.5px;line-height:18px;color:#e4e4e4;-webkit-text-stroke:0.3px;letter-spacing:0.22px;">Averaging (samples)</span><div class="b" style="left:216.5px;top:1378.06px;width:127.5px;height:1px;background:repeating-linear-gradient(90deg,#a8a8a8 0 1.3px,transparent 1.3px 3px);"></div><div class="b" style="left:422px;top:1361.7px;width:57.5px;height:18.5px;background:#323232;border-radius:3px;border:1px solid #5e5e5e;"></div><div class="b" style="left:423px;top:1362.7px;width:13.5px;height:16.5px;background:#282828;border-radius:2px 0 0 2px;border-right:1px solid #5e5e5e;"></div><svg class="b" style="left:421.55px;top:1362.95px;" width="16" height="16" viewBox="-8 -8 16 16"><path d="M-2.7 -2.25L0 -4.95L2.7 -2.25M-2.7 2.25L0 4.95L2.7 2.25" stroke="#d0d0d0" stroke-width="1.1" fill="none" stroke-linecap="round" stroke-linejoin="round"/></svg><span class="t" style="left:468.09px;top:1361.93px;font-size:13.5px;line-height:18px;color:#f0f0f0;-webkit-text-stroke:0.25px;">1</span><span class="t" style="left:216.5px;top:1391.58px;font-size:13.5px;line-height:18px;color:#e4e4e4;-webkit-text-stroke:0.3px;letter-spacing:0.39px;">Measurements</span><span class="t" style="left:468.35px;top:1391.98px;font-size:12.5px;line-height:16px;color:#c4c4c4;">1</span><svg class="b" style="left:206.2px;top:1237.7px;" width="284.1" height="181.6" viewBox="0 0 284.1 181.6"><rect x="0.68" y="0.68" width="282.75" height="180.25" rx="4.5" fill="none" stroke="#4a8fe6" stroke-width="1.35" stroke-dasharray="3 2.2"/></svg></div></div><div class="p" style="left:1005.5px;top:-30px;width:1024.5px;height:317px;background:#0a0a0a;box-shadow:0 0 0 2px #0658aa,0 0 0 4px #0a5aab,0 0 0 6px #0f5cab,0 0 0 8px #155eac,0 0 0 10px #1a60ad;"><div class="c" style="left:-1005.5px;top:30px;"><div class="b" style="left:1034px;top:-10px;width:282px;height:320px;background:#2a2a2a;"></div><div class="b" style="left:1038.5px;top:-20px;width:272.5px;height:259px;background:#101010;border-radius:5px;"></div><div class="b" style="left:1043px;top:-60px;width:263px;height:111.5px;background:#282828;border-radius:5px;"></div><span class="t" style="left:1052.5px;top:-32.02px;font-size:13.5px;line-height:18px;color:#e4e4e4;-webkit-text-stroke:0.3px;letter-spacing:0.48px;">Integration Time</span><div class="b" style="left:1052.5px;top:-15.94px;width:104px;height:1px;background:repeating-linear-gradient(90deg,#a8a8a8 0 1.3px,transparent 1.3px 3px);"></div><div class="b" style="left:1189px;top:-32.3px;width:45.5px;height:18.5px;background:#282828;border-radius:3px;border:1px solid #5e5e5e;"></div><div class="b" style="left:1218px;top:-31.3px;width:1px;height:16.5px;background:#5e5e5e;"></div><span class="t" style="left:1193.5px;top:-32.07px;font-size:13.5px;line-height:18px;color:#f0f0f0;-webkit-text-stroke:0.25px;letter-spacing:1px;">ms</span><svg class="b" style="left:1218.3px;top:-30.65px;" width="16" height="16" viewBox="-8 -8 16 16"><path d="M-3.5 -1.7L0 1.7L3.5 -1.7" stroke="#d0d0d0" stroke-width="1.15" fill="none" stroke-linecap="round" stroke-linejoin="round"/></svg><div class="b" style="left:1239.5px;top:-32.3px;width:57.5px;height:18.5px;background:#282828;border-radius:3px;border:1px solid #5e5e5e;"></div><div class="b" style="left:1240.5px;top:-31.3px;width:13.5px;height:16.5px;background:#282828;border-radius:2px 0 0 2px;border-right:1px solid #5e5e5e;"></div><svg class="b" style="left:1239.05px;top:-31.05px;" width="16" height="16" viewBox="-8 -8 16 16"><path d="M-2.7 -2.25L0 -4.95L2.7 -2.25M-2.7 2.25L0 4.95L2.7 2.25" stroke="#d0d0d0" stroke-width="1.1" fill="none" stroke-linecap="round" stroke-linejoin="round"/></svg><span class="t" style="left:1261px;top:-32.07px;font-size:13.5px;line-height:18px;color:#f0f0f0;-webkit-text-stroke:0.25px;letter-spacing:-0.82px;">1.050</span><span class="t" style="left:1052.5px;top:-4.02px;font-size:13.5px;line-height:18px;color:#e4e4e4;-webkit-text-stroke:0.3px;letter-spacing:0.22px;">Averaging (samples)</span><div class="b" style="left:1052.5px;top:12.06px;width:127.5px;height:1px;background:repeating-linear-gradient(90deg,#a8a8a8 0 1.3px,transparent 1.3px 3px);"></div><div class="b" style="left:1239.5px;top:-4.3px;width:57.5px;height:18.5px;background:#323232;border-radius:3px;border:1px solid #5e5e5e;"></div><div class="b" style="left:1240.5px;top:-3.3px;width:13.5px;height:16.5px;background:#282828;border-radius:2px 0 0 2px;border-right:1px solid #5e5e5e;"></div><svg class="b" style="left:1239.05px;top:-3.05px;" width="16" height="16" viewBox="-8 -8 16 16"><path d="M-2.7 -2.25L0 -4.95L2.7 -2.25M-2.7 2.25L0 4.95L2.7 2.25" stroke="#d0d0d0" stroke-width="1.1" fill="none" stroke-linecap="round" stroke-linejoin="round"/></svg><span class="t" style="left:1285.59px;top:-4.07px;font-size:13.5px;line-height:18px;color:#f0f0f0;-webkit-text-stroke:0.25px;">1</span><span class="t" style="left:1052.5px;top:25.58px;font-size:13.5px;line-height:18px;color:#e4e4e4;-webkit-text-stroke:0.3px;letter-spacing:0.39px;">Measurements</span><span class="t" style="left:1285.85px;top:25.98px;font-size:12.5px;line-height:16px;color:#c4c4c4;">1</span><div class="b" style="left:1043px;top:56px;width:263px;height:47px;background:#141414;border-radius:4px 4px 0 0;"></div><svg class="b" style="left:1048.4px;top:67.5px;" width="24" height="24" viewBox="-12 -12 24 24"><circle r="8.2" fill="#5c5c5c"/><path d="M-2.3 -3.1A3.9 3.9 0 1 0 2.3 -3.1M0 -4.6V-0.4" fill="none" stroke="#1a1a1a" stroke-width="1.3" stroke-linecap="round"/></svg><span class="t" style="left:1074px;top:70.98px;font-size:13.5px;line-height:18px;color:#eaeaea;font-weight:700;letter-spacing:0.09px;">Spectrometer</span><svg class="b" style="left:1270.9px;top:67.7px;" width="24" height="24" viewBox="-12 -12 24 24"><path d="M-8 -4.25H8M-8 0H8M-8 4.25H8" stroke="#f0f0f0" stroke-width="1.6" fill="none"/></svg><div class="b" style="left:1043px;top:103px;width:263px;height:37.5px;background:#1f1f1f;"></div><svg class="b" style="left:1045px;top:110px;" width="24" height="24" viewBox="-12 -12 24 24"><circle r="2.35" fill="none" stroke="#c4c4c4" stroke-width="1.15"/><path d="M5.2 0L7.8 0M3.68 3.68L5.52 5.52M0 5.2L0 7.8M-3.68 3.68L-5.52 5.52M-5.2 0L-7.8 0M-3.68 -3.68L-5.52 -5.52M0 -5.2L0 -7.8M3.68 -3.68L5.52 -5.52" stroke="#c4c4c4" stroke-width="1.25" stroke-linecap="butt" fill="none"/></svg><svg class="b" style="left:1077.6px;top:110px;" width="24" height="24" viewBox="-12 -12 24 24"><path d="M-4.5 -7.3C1.6 -7.3 5.3 -4 5.3 0C5.3 4 1.6 7.3 -4.5 7.3C-0.4 5.7 1.5 3 1.5 0C1.5 -3 -0.4 -5.7 -4.5 -7.3Z" fill="none" stroke="#c4c4c4" stroke-width="1.15" stroke-linejoin="round"/></svg><svg class="b" style="left:1112px;top:110px;" width="24" height="24" viewBox="-12 -12 24 24"><path d="M-7.4 0.4A7.4 7.4 0 1 1 -0.9 7.34M-9.9 -2.3L-7.4 0.6L-4.8 -2.1" fill="none" stroke="#c4c4c4" stroke-width="1.15" stroke-linecap="round" stroke-linejoin="round"/><circle r="1.9" fill="none" stroke="#c4c4c4" stroke-width="1.15"/></svg><svg class="b" style="left:1143.9px;top:110px;" width="24" height="24" viewBox="-12 -12 24 24"><path d="M5.83 -1.4L7.73 -1.04L7.73 1.04L5.83 1.4L5.12 3.13L6.2 4.73L4.73 6.2L3.13 5.12L1.4 5.83L1.04 7.73L-1.04 7.73L-1.4 5.83L-3.13 5.12L-4.73 6.2L-6.2 4.73L-5.12 3.13L-5.83 1.4L-7.73 1.04L-7.73 -1.04L-5.83 -1.4L-5.12 -3.13L-6.2 -4.73L-4.73 -6.2L-3.13 -5.12L-1.4 -5.83L-1.04 -7.73L1.04 -7.73L1.4 -5.83L3.13 -5.12L4.73 -6.2L6.2 -4.73L5.12 -3.13Z" fill="none" stroke="#c4c4c4" stroke-width="1.15" stroke-linejoin="round" transform="rotate(22.5)"/><circle r="3" fill="none" stroke="#c4c4c4" stroke-width="1.15"/></svg><div class="b" style="left:1043px;top:140.5px;width:263px;height:94px;background:#282828;border-radius:0 0 5px 5px;"></div><span class="t" style="left:1052.5px;top:150.98px;font-size:13.5px;line-height:18px;color:#e4e4e4;-webkit-text-stroke:0.3px;letter-spacing:0.48px;">Integration Time</span><div class="b" style="left:1052.5px;top:167.06px;width:104px;height:1px;background:repeating-linear-gradient(90deg,#a8a8a8 0 1.3px,transparent 1.3px 3px);"></div><div class="b" style="left:1189px;top:150.7px;width:45.5px;height:18.5px;background:#282828;border-radius:3px;border:1px solid #5e5e5e;"></div><div class="b" style="left:1218px;top:151.7px;width:1px;height:16.5px;background:#5e5e5e;"></div><span class="t" style="left:1193.5px;top:150.93px;font-size:13.5px;line-height:18px;color:#f0f0f0;-webkit-text-stroke:0.25px;letter-spacing:1px;">ms</span><svg class="b" style="left:1218.3px;top:152.35px;" width="16" height="16" viewBox="-8 -8 16 16"><path d="M-3.5 -1.7L0 1.7L3.5 -1.7" stroke="#d0d0d0" stroke-width="1.15" fill="none" stroke-linecap="round" stroke-linejoin="round"/></svg><div class="b" style="left:1239.5px;top:150.7px;width:57.5px;height:18.5px;background:#282828;border-radius:3px;border:1px solid #5e5e5e;"></div><div class="b" style="left:1240.5px;top:151.7px;width:13.5px;height:16.5px;background:#282828;border-radius:2px 0 0 2px;border-right:1px solid #5e5e5e;"></div><svg class="b" style="left:1239.05px;top:151.95px;" width="16" height="16" viewBox="-8 -8 16 16"><path d="M-2.7 -2.25L0 -4.95L2.7 -2.25M-2.7 2.25L0 4.95L2.7 2.25" stroke="#d0d0d0" stroke-width="1.1" fill="none" stroke-linecap="round" stroke-linejoin="round"/></svg><span class="t" style="left:1261px;top:150.93px;font-size:13.5px;line-height:18px;color:#f0f0f0;-webkit-text-stroke:0.25px;letter-spacing:-0.82px;">1.050</span><span class="t" style="left:1052.5px;top:178.98px;font-size:13.5px;line-height:18px;color:#e4e4e4;-webkit-text-stroke:0.3px;letter-spacing:0.22px;">Averaging (samples)</span><div class="b" style="left:1052.5px;top:195.06px;width:127.5px;height:1px;background:repeating-linear-gradient(90deg,#a8a8a8 0 1.3px,transparent 1.3px 3px);"></div><div class="b" style="left:1239.5px;top:178.7px;width:57.5px;height:18.5px;background:#323232;border-radius:3px;border:1px solid #5e5e5e;"></div><div class="b" style="left:1240.5px;top:179.7px;width:13.5px;height:16.5px;background:#282828;border-radius:2px 0 0 2px;border-right:1px solid #5e5e5e;"></div><svg class="b" style="left:1239.05px;top:179.95px;" width="16" height="16" viewBox="-8 -8 16 16"><path d="M-2.7 -2.25L0 -4.95L2.7 -2.25M-2.7 2.25L0 4.95L2.7 2.25" stroke="#d0d0d0" stroke-width="1.1" fill="none" stroke-linecap="round" stroke-linejoin="round"/></svg><span class="t" style="left:1285.59px;top:178.93px;font-size:13.5px;line-height:18px;color:#f0f0f0;-webkit-text-stroke:0.25px;">1</span><span class="t" style="left:1052.5px;top:208.58px;font-size:13.5px;line-height:18px;color:#e4e4e4;-webkit-text-stroke:0.3px;letter-spacing:0.39px;">Measurements</span><span class="t" style="left:1285.85px;top:208.98px;font-size:12.5px;line-height:16px;color:#c4c4c4;">1</span><div class="b" style="left:1038.5px;top:244px;width:272.5px;height:47px;background:#062406;border-radius:4px 4px 0 0;"></div><svg class="b" style="left:1043.9px;top:255.5px;" width="24" height="24" viewBox="-12 -12 24 24"><circle r="8.2" fill="#158a15"/><path d="M-2.3 -3.1A3.9 3.9 0 1 0 2.3 -3.1M0 -4.6V-0.4" fill="none" stroke="#e4f8e4" stroke-width="1.3" stroke-linecap="round"/></svg><span class="t" style="left:1069.5px;top:258.98px;font-size:13.5px;line-height:18px;color:#eaeaea;font-weight:700;letter-spacing:0.09px;">Spectrometer</span><svg class="b" style="left:1275.9px;top:255.7px;" width="24" height="24" viewBox="-12 -12 24 24"><path d="M-8 -4.25H8M-8 0H8M-8 4.25H8" stroke="#f0f0f0" stroke-width="1.6" fill="none"/></svg><div class="b" style="left:1038.5px;top:291px;width:272.5px;height:37.5px;background:#1f1f1f;"></div><svg class="b" style="left:1040.5px;top:298px;" width="24" height="24" viewBox="-12 -12 24 24"><circle r="2.35" fill="none" stroke="#c4c4c4" stroke-width="1.15"/><path d="M5.2 0L7.8 0M3.68 3.68L5.52 5.52M0 5.2L0 7.8M-3.68 3.68L-5.52 5.52M-5.2 0L-7.8 0M-3.68 -3.68L-5.52 -5.52M0 -5.2L0 -7.8M3.68 -3.68L5.52 -5.52" stroke="#c4c4c4" stroke-width="1.25" stroke-linecap="butt" fill="none"/></svg><svg class="b" style="left:1073.1px;top:298px;" width="24" height="24" viewBox="-12 -12 24 24"><path d="M-4.5 -7.3C1.6 -7.3 5.3 -4 5.3 0C5.3 4 1.6 7.3 -4.5 7.3C-0.4 5.7 1.5 3 1.5 0C1.5 -3 -0.4 -5.7 -4.5 -7.3Z" fill="none" stroke="#c4c4c4" stroke-width="1.15" stroke-linejoin="round"/></svg><svg class="b" style="left:1107.5px;top:298px;" width="24" height="24" viewBox="-12 -12 24 24"><path d="M-7.4 0.4A7.4 7.4 0 1 1 -0.9 7.34M-9.9 -2.3L-7.4 0.6L-4.8 -2.1" fill="none" stroke="#c4c4c4" stroke-width="1.15" stroke-linecap="round" stroke-linejoin="round"/><circle r="1.9" fill="none" stroke="#c4c4c4" stroke-width="1.15"/></svg><svg class="b" style="left:1139.4px;top:298px;" width="24" height="24" viewBox="-12 -12 24 24"><path d="M5.83 -1.4L7.73 -1.04L7.73 1.04L5.83 1.4L5.12 3.13L6.2 4.73L4.73 6.2L3.13 5.12L1.4 5.83L1.04 7.73L-1.04 7.73L-1.4 5.83L-3.13 5.12L-4.73 6.2L-6.2 4.73L-5.12 3.13L-5.83 1.4L-7.73 1.04L-7.73 -1.04L-5.83 -1.4L-5.12 -3.13L-6.2 -4.73L-4.73 -6.2L-3.13 -5.12L-1.4 -5.83L-1.04 -7.73L1.04 -7.73L1.4 -5.83L3.13 -5.12L4.73 -6.2L6.2 -4.73L5.12 -3.13Z" fill="none" stroke="#c4c4c4" stroke-width="1.15" stroke-linejoin="round" transform="rotate(22.5)"/><circle r="3" fill="none" stroke="#c4c4c4" stroke-width="1.15"/></svg><div class="b" style="left:1250px;top:296px;width:28px;height:28px;background:#343434;border-radius:4.5px;border:1px solid #606060;"></div><svg class="b" style="left:1252px;top:298px;" width="24" height="24" viewBox="-12 -12 24 24"><path d="M5.7 9.2C5.7 2 2 -3.6 -6.4 -4.9M-1.1 -8.4L-7 -5L-3.8 -0.1" fill="none" stroke="#c4c4c4" stroke-width="1.4" stroke-linecap="round" stroke-linejoin="round"/></svg><div class="b" style="left:1282.5px;top:296px;width:28px;height:28px;background:#343434;border-radius:4.5px;border:1px solid #606060;"></div><svg class="b" style="left:1284.5px;top:298px;" width="24" height="24" viewBox="-12 -12 24 24"><path d="M5.7 9.2C5.7 2 2 -3.6 -6.4 -4.9M-1.1 -8.4L-7 -5L-3.8 -0.1" fill="none" stroke="#c4c4c4" stroke-width="1.4" stroke-linecap="round" stroke-linejoin="round" transform="scale(-1,1)"/></svg><div class="b" style="left:1038.5px;top:328.5px;width:272.5px;height:94px;background:#282828;border-radius:0 0 5px 5px;"></div><span class="t" style="left:1048px;top:338.98px;font-size:13.5px;line-height:18px;color:#e4e4e4;-webkit-text-stroke:0.3px;letter-spacing:0.48px;">Integration Time</span><div class="b" style="left:1048px;top:355.06px;width:104px;height:1px;background:repeating-linear-gradient(90deg,#a8a8a8 0 1.3px,transparent 1.3px 3px);"></div><div class="b" style="left:1194px;top:338.7px;width:45.5px;height:18.5px;background:#282828;border-radius:3px;border:1px solid #5e5e5e;"></div><div class="b" style="left:1223px;top:339.7px;width:1px;height:16.5px;background:#5e5e5e;"></div><span class="t" style="left:1198.5px;top:338.93px;font-size:13.5px;line-height:18px;color:#f0f0f0;-webkit-text-stroke:0.25px;letter-spacing:1px;">ms</span><svg class="b" style="left:1223.3px;top:340.35px;" width="16" height="16" viewBox="-8 -8 16 16"><path d="M-3.5 -1.7L0 1.7L3.5 -1.7" stroke="#d0d0d0" stroke-width="1.15" fill="none" stroke-linecap="round" stroke-linejoin="round"/></svg><div class="b" style="left:1244.5px;top:338.7px;width:57.5px;height:18.5px;background:#282828;border-radius:3px;border:1px solid #5e5e5e;"></div><div class="b" style="left:1245.5px;top:339.7px;width:13.5px;height:16.5px;background:#282828;border-radius:2px 0 0 2px;border-right:1px solid #5e5e5e;"></div><svg class="b" style="left:1244.05px;top:339.95px;" width="16" height="16" viewBox="-8 -8 16 16"><path d="M-2.7 -2.25L0 -4.95L2.7 -2.25M-2.7 2.25L0 4.95L2.7 2.25" stroke="#d0d0d0" stroke-width="1.1" fill="none" stroke-linecap="round" stroke-linejoin="round"/></svg><span class="t" style="left:1266px;top:338.93px;font-size:13.5px;line-height:18px;color:#f0f0f0;-webkit-text-stroke:0.25px;letter-spacing:-0.82px;">1.050</span><span class="t" style="left:1048px;top:366.98px;font-size:13.5px;line-height:18px;color:#e4e4e4;-webkit-text-stroke:0.3px;letter-spacing:0.22px;">Averaging (samples)</span><div class="b" style="left:1048px;top:383.06px;width:127.5px;height:1px;background:repeating-linear-gradient(90deg,#a8a8a8 0 1.3px,transparent 1.3px 3px);"></div><div class="b" style="left:1244.5px;top:366.7px;width:57.5px;height:18.5px;background:#323232;border-radius:3px;border:1px solid #5e5e5e;"></div><div class="b" style="left:1245.5px;top:367.7px;width:13.5px;height:16.5px;background:#282828;border-radius:2px 0 0 2px;border-right:1px solid #5e5e5e;"></div><svg class="b" style="left:1244.05px;top:367.95px;" width="16" height="16" viewBox="-8 -8 16 16"><path d="M-2.7 -2.25L0 -4.95L2.7 -2.25M-2.7 2.25L0 4.95L2.7 2.25" stroke="#d0d0d0" stroke-width="1.1" fill="none" stroke-linecap="round" stroke-linejoin="round"/></svg><span class="t" style="left:1290.59px;top:366.93px;font-size:13.5px;line-height:18px;color:#f0f0f0;-webkit-text-stroke:0.25px;">1</span><span class="t" style="left:1048px;top:396.58px;font-size:13.5px;line-height:18px;color:#e4e4e4;-webkit-text-stroke:0.3px;letter-spacing:0.39px;">Measurements</span><span class="t" style="left:1290.85px;top:396.98px;font-size:12.5px;line-height:16px;color:#c4c4c4;">1</span><div class="b" style="left:1443px;top:-10px;width:282px;height:320px;background:#232323;"></div><div class="b" style="left:1447px;top:-10px;width:273px;height:320px;background:#0f0f0f;"></div><div class="b" style="left:1452px;top:-60px;width:263px;height:108.5px;background:#282828;border-radius:5px;"></div><span class="t" style="left:1461.5px;top:-35.02px;font-size:13.5px;line-height:18px;color:#e4e4e4;-webkit-text-stroke:0.3px;letter-spacing:0.48px;">Integration Time</span><div class="b" style="left:1461.5px;top:-18.94px;width:104px;height:1px;background:repeating-linear-gradient(90deg,#a8a8a8 0 1.3px,transparent 1.3px 3px);"></div><div class="b" style="left:1598px;top:-35.3px;width:45.5px;height:18.5px;background:#282828;border-radius:3px;border:1px solid #5e5e5e;"></div><div class="b" style="left:1627px;top:-34.3px;width:1px;height:16.5px;background:#5e5e5e;"></div><span class="t" style="left:1602.5px;top:-35.07px;font-size:13.5px;line-height:18px;color:#f0f0f0;-webkit-text-stroke:0.25px;letter-spacing:1px;">ms</span><svg class="b" style="left:1627.3px;top:-33.65px;" width="16" height="16" viewBox="-8 -8 16 16"><path d="M-3.5 -1.7L0 1.7L3.5 -1.7" stroke="#d0d0d0" stroke-width="1.15" fill="none" stroke-linecap="round" stroke-linejoin="round"/></svg><div class="b" style="left:1648.5px;top:-35.3px;width:57.5px;height:18.5px;background:#282828;border-radius:3px;border:1px solid #5e5e5e;"></div><div class="b" style="left:1649.5px;top:-34.3px;width:13.5px;height:16.5px;background:#282828;border-radius:2px 0 0 2px;border-right:1px solid #5e5e5e;"></div><svg class="b" style="left:1648.05px;top:-34.05px;" width="16" height="16" viewBox="-8 -8 16 16"><path d="M-2.7 -2.25L0 -4.95L2.7 -2.25M-2.7 2.25L0 4.95L2.7 2.25" stroke="#d0d0d0" stroke-width="1.1" fill="none" stroke-linecap="round" stroke-linejoin="round"/></svg><span class="t" style="left:1670px;top:-35.07px;font-size:13.5px;line-height:18px;color:#f0f0f0;-webkit-text-stroke:0.25px;letter-spacing:-0.82px;">1.050</span><span class="t" style="left:1461.5px;top:-7.02px;font-size:13.5px;line-height:18px;color:#e4e4e4;-webkit-text-stroke:0.3px;letter-spacing:0.22px;">Averaging (samples)</span><div class="b" style="left:1461.5px;top:9.06px;width:127.5px;height:1px;background:repeating-linear-gradient(90deg,#a8a8a8 0 1.3px,transparent 1.3px 3px);"></div><div class="b" style="left:1648.5px;top:-7.3px;width:57.5px;height:18.5px;background:#323232;border-radius:3px;border:1px solid #5e5e5e;"></div><div class="b" style="left:1649.5px;top:-6.3px;width:13.5px;height:16.5px;background:#282828;border-radius:2px 0 0 2px;border-right:1px solid #5e5e5e;"></div><svg class="b" style="left:1648.05px;top:-6.05px;" width="16" height="16" viewBox="-8 -8 16 16"><path d="M-2.7 -2.25L0 -4.95L2.7 -2.25M-2.7 2.25L0 4.95L2.7 2.25" stroke="#d0d0d0" stroke-width="1.1" fill="none" stroke-linecap="round" stroke-linejoin="round"/></svg><span class="t" style="left:1694.59px;top:-7.07px;font-size:13.5px;line-height:18px;color:#f0f0f0;-webkit-text-stroke:0.25px;">1</span><span class="t" style="left:1461.5px;top:22.58px;font-size:13.5px;line-height:18px;color:#e4e4e4;-webkit-text-stroke:0.3px;letter-spacing:0.39px;">Measurements</span><span class="t" style="left:1694.85px;top:22.98px;font-size:12.5px;line-height:16px;color:#c4c4c4;">1</span><div class="b" style="left:1452px;top:54px;width:263px;height:47px;background:#062406;border-radius:4px 4px 0 0;"></div><svg class="b" style="left:1457.4px;top:65.5px;" width="24" height="24" viewBox="-12 -12 24 24"><circle r="8.2" fill="#158a15"/><path d="M-2.3 -3.1A3.9 3.9 0 1 0 2.3 -3.1M0 -4.6V-0.4" fill="none" stroke="#e4f8e4" stroke-width="1.3" stroke-linecap="round"/></svg><span class="t" style="left:1483px;top:68.98px;font-size:13.5px;line-height:18px;color:#eaeaea;font-weight:700;letter-spacing:0.09px;">Spectrometer</span><svg class="b" style="left:1679.9px;top:65.7px;" width="24" height="24" viewBox="-12 -12 24 24"><path d="M-8 -4.25H8M-8 0H8M-8 4.25H8" stroke="#f0f0f0" stroke-width="1.6" fill="none"/></svg><div class="b" style="left:1452px;top:101px;width:263px;height:37.5px;background:#1f1f1f;"></div><svg class="b" style="left:1454px;top:108px;" width="24" height="24" viewBox="-12 -12 24 24"><circle r="2.35" fill="none" stroke="#c4c4c4" stroke-width="1.15"/><path d="M5.2 0L7.8 0M3.68 3.68L5.52 5.52M0 5.2L0 7.8M-3.68 3.68L-5.52 5.52M-5.2 0L-7.8 0M-3.68 -3.68L-5.52 -5.52M0 -5.2L0 -7.8M3.68 -3.68L5.52 -5.52" stroke="#c4c4c4" stroke-width="1.25" stroke-linecap="butt" fill="none"/></svg><svg class="b" style="left:1486.6px;top:108px;" width="24" height="24" viewBox="-12 -12 24 24"><path d="M-4.5 -7.3C1.6 -7.3 5.3 -4 5.3 0C5.3 4 1.6 7.3 -4.5 7.3C-0.4 5.7 1.5 3 1.5 0C1.5 -3 -0.4 -5.7 -4.5 -7.3Z" fill="none" stroke="#c4c4c4" stroke-width="1.15" stroke-linejoin="round"/></svg><svg class="b" style="left:1521px;top:108px;" width="24" height="24" viewBox="-12 -12 24 24"><path d="M-7.4 0.4A7.4 7.4 0 1 1 -0.9 7.34M-9.9 -2.3L-7.4 0.6L-4.8 -2.1" fill="none" stroke="#c4c4c4" stroke-width="1.15" stroke-linecap="round" stroke-linejoin="round"/><circle r="1.9" fill="none" stroke="#c4c4c4" stroke-width="1.15"/></svg><svg class="b" style="left:1552.9px;top:108px;" width="24" height="24" viewBox="-12 -12 24 24"><path d="M5.83 -1.4L7.73 -1.04L7.73 1.04L5.83 1.4L5.12 3.13L6.2 4.73L4.73 6.2L3.13 5.12L1.4 5.83L1.04 7.73L-1.04 7.73L-1.4 5.83L-3.13 5.12L-4.73 6.2L-6.2 4.73L-5.12 3.13L-5.83 1.4L-7.73 1.04L-7.73 -1.04L-5.83 -1.4L-5.12 -3.13L-6.2 -4.73L-4.73 -6.2L-3.13 -5.12L-1.4 -5.83L-1.04 -7.73L1.04 -7.73L1.4 -5.83L3.13 -5.12L4.73 -6.2L6.2 -4.73L5.12 -3.13Z" fill="none" stroke="#c4c4c4" stroke-width="1.15" stroke-linejoin="round" transform="rotate(22.5)"/><circle r="3" fill="none" stroke="#c4c4c4" stroke-width="1.15"/></svg><div class="b" style="left:1654px;top:106px;width:28px;height:28px;background:#343434;border-radius:4.5px;border:1px solid #606060;"></div><svg class="b" style="left:1656px;top:108px;" width="24" height="24" viewBox="-12 -12 24 24"><path d="M5.7 9.2C5.7 2 2 -3.6 -6.4 -4.9M-1.1 -8.4L-7 -5L-3.8 -0.1" fill="none" stroke="#c4c4c4" stroke-width="1.4" stroke-linecap="round" stroke-linejoin="round"/></svg><div class="b" style="left:1686.5px;top:106px;width:28px;height:28px;background:#343434;border-radius:4.5px;border:1px solid #606060;"></div><svg class="b" style="left:1688.5px;top:108px;" width="24" height="24" viewBox="-12 -12 24 24"><path d="M5.7 9.2C5.7 2 2 -3.6 -6.4 -4.9M-1.1 -8.4L-7 -5L-3.8 -0.1" fill="none" stroke="#c4c4c4" stroke-width="1.4" stroke-linecap="round" stroke-linejoin="round" transform="scale(-1,1)"/></svg><div class="b" style="left:1452px;top:138.5px;width:263px;height:94px;background:#282828;border-radius:0 0 5px 5px;"></div><span class="t" style="left:1461.5px;top:148.98px;font-size:13.5px;line-height:18px;color:#e4e4e4;-webkit-text-stroke:0.3px;letter-spacing:0.48px;">Integration Time</span><div class="b" style="left:1461.5px;top:165.06px;width:104px;height:1px;background:repeating-linear-gradient(90deg,#a8a8a8 0 1.3px,transparent 1.3px 3px);"></div><div class="b" style="left:1598px;top:148.7px;width:45.5px;height:18.5px;background:#282828;border-radius:3px;border:1px solid #5e5e5e;"></div><div class="b" style="left:1627px;top:149.7px;width:1px;height:16.5px;background:#5e5e5e;"></div><span class="t" style="left:1602.5px;top:148.93px;font-size:13.5px;line-height:18px;color:#f0f0f0;-webkit-text-stroke:0.25px;letter-spacing:1px;">ms</span><svg class="b" style="left:1627.3px;top:150.35px;" width="16" height="16" viewBox="-8 -8 16 16"><path d="M-3.5 -1.7L0 1.7L3.5 -1.7" stroke="#d0d0d0" stroke-width="1.15" fill="none" stroke-linecap="round" stroke-linejoin="round"/></svg><div class="b" style="left:1648.5px;top:148.7px;width:57.5px;height:18.5px;background:#282828;border-radius:3px;border:1px solid #5e5e5e;"></div><div class="b" style="left:1649.5px;top:149.7px;width:13.5px;height:16.5px;background:#282828;border-radius:2px 0 0 2px;border-right:1px solid #5e5e5e;"></div><svg class="b" style="left:1648.05px;top:149.95px;" width="16" height="16" viewBox="-8 -8 16 16"><path d="M-2.7 -2.25L0 -4.95L2.7 -2.25M-2.7 2.25L0 4.95L2.7 2.25" stroke="#d0d0d0" stroke-width="1.1" fill="none" stroke-linecap="round" stroke-linejoin="round"/></svg><span class="t" style="left:1670px;top:148.93px;font-size:13.5px;line-height:18px;color:#f0f0f0;-webkit-text-stroke:0.25px;letter-spacing:-0.82px;">1.050</span><span class="t" style="left:1461.5px;top:176.98px;font-size:13.5px;line-height:18px;color:#e4e4e4;-webkit-text-stroke:0.3px;letter-spacing:0.22px;">Averaging (samples)</span><div class="b" style="left:1461.5px;top:193.06px;width:127.5px;height:1px;background:repeating-linear-gradient(90deg,#a8a8a8 0 1.3px,transparent 1.3px 3px);"></div><div class="b" style="left:1648.5px;top:176.7px;width:57.5px;height:18.5px;background:#323232;border-radius:3px;border:1px solid #5e5e5e;"></div><div class="b" style="left:1649.5px;top:177.7px;width:13.5px;height:16.5px;background:#282828;border-radius:2px 0 0 2px;border-right:1px solid #5e5e5e;"></div><svg class="b" style="left:1648.05px;top:177.95px;" width="16" height="16" viewBox="-8 -8 16 16"><path d="M-2.7 -2.25L0 -4.95L2.7 -2.25M-2.7 2.25L0 4.95L2.7 2.25" stroke="#d0d0d0" stroke-width="1.1" fill="none" stroke-linecap="round" stroke-linejoin="round"/></svg><span class="t" style="left:1694.59px;top:176.93px;font-size:13.5px;line-height:18px;color:#f0f0f0;-webkit-text-stroke:0.25px;">1</span><span class="t" style="left:1461.5px;top:206.58px;font-size:13.5px;line-height:18px;color:#e4e4e4;-webkit-text-stroke:0.3px;letter-spacing:0.39px;">Measurements</span><span class="t" style="left:1694.85px;top:206.98px;font-size:12.5px;line-height:16px;color:#c4c4c4;">1</span><div class="b" style="left:1452px;top:237px;width:263px;height:47px;background:#141414;border-radius:4px 4px 0 0;"></div><svg class="b" style="left:1457.4px;top:248.5px;" width="24" height="24" viewBox="-12 -12 24 24"><circle r="8.2" fill="#5c5c5c"/><path d="M-2.3 -3.1A3.9 3.9 0 1 0 2.3 -3.1M0 -4.6V-0.4" fill="none" stroke="#1a1a1a" stroke-width="1.3" stroke-linecap="round"/></svg><span class="t" style="left:1483px;top:251.98px;font-size:13.5px;line-height:18px;color:#eaeaea;font-weight:700;letter-spacing:0.09px;">Spectrometer</span><svg class="b" style="left:1679.9px;top:248.7px;" width="24" height="24" viewBox="-12 -12 24 24"><path d="M-8 -4.25H8M-8 0H8M-8 4.25H8" stroke="#f0f0f0" stroke-width="1.6" fill="none"/></svg><div class="b" style="left:1452px;top:284px;width:263px;height:37.5px;background:#1f1f1f;"></div><svg class="b" style="left:1454px;top:291px;" width="24" height="24" viewBox="-12 -12 24 24"><circle r="2.35" fill="none" stroke="#c4c4c4" stroke-width="1.15"/><path d="M5.2 0L7.8 0M3.68 3.68L5.52 5.52M0 5.2L0 7.8M-3.68 3.68L-5.52 5.52M-5.2 0L-7.8 0M-3.68 -3.68L-5.52 -5.52M0 -5.2L0 -7.8M3.68 -3.68L5.52 -5.52" stroke="#c4c4c4" stroke-width="1.25" stroke-linecap="butt" fill="none"/></svg><svg class="b" style="left:1486.6px;top:291px;" width="24" height="24" viewBox="-12 -12 24 24"><path d="M-4.5 -7.3C1.6 -7.3 5.3 -4 5.3 0C5.3 4 1.6 7.3 -4.5 7.3C-0.4 5.7 1.5 3 1.5 0C1.5 -3 -0.4 -5.7 -4.5 -7.3Z" fill="none" stroke="#c4c4c4" stroke-width="1.15" stroke-linejoin="round"/></svg><svg class="b" style="left:1521px;top:291px;" width="24" height="24" viewBox="-12 -12 24 24"><path d="M-7.4 0.4A7.4 7.4 0 1 1 -0.9 7.34M-9.9 -2.3L-7.4 0.6L-4.8 -2.1" fill="none" stroke="#c4c4c4" stroke-width="1.15" stroke-linecap="round" stroke-linejoin="round"/><circle r="1.9" fill="none" stroke="#c4c4c4" stroke-width="1.15"/></svg><svg class="b" style="left:1552.9px;top:291px;" width="24" height="24" viewBox="-12 -12 24 24"><path d="M5.83 -1.4L7.73 -1.04L7.73 1.04L5.83 1.4L5.12 3.13L6.2 4.73L4.73 6.2L3.13 5.12L1.4 5.83L1.04 7.73L-1.04 7.73L-1.4 5.83L-3.13 5.12L-4.73 6.2L-6.2 4.73L-5.12 3.13L-5.83 1.4L-7.73 1.04L-7.73 -1.04L-5.83 -1.4L-5.12 -3.13L-6.2 -4.73L-4.73 -6.2L-3.13 -5.12L-1.4 -5.83L-1.04 -7.73L1.04 -7.73L1.4 -5.83L3.13 -5.12L4.73 -6.2L6.2 -4.73L5.12 -3.13Z" fill="none" stroke="#c4c4c4" stroke-width="1.15" stroke-linejoin="round" transform="rotate(22.5)"/><circle r="3" fill="none" stroke="#c4c4c4" stroke-width="1.15"/></svg><div class="b" style="left:1654px;top:289px;width:28px;height:28px;background:#343434;border-radius:4.5px;border:1px solid #606060;"></div><svg class="b" style="left:1656px;top:291px;" width="24" height="24" viewBox="-12 -12 24 24"><path d="M5.7 9.2C5.7 2 2 -3.6 -6.4 -4.9M-1.1 -8.4L-7 -5L-3.8 -0.1" fill="none" stroke="#c4c4c4" stroke-width="1.4" stroke-linecap="round" stroke-linejoin="round"/></svg><div class="b" style="left:1686.5px;top:289px;width:28px;height:28px;background:#343434;border-radius:4.5px;border:1px solid #606060;"></div><svg class="b" style="left:1688.5px;top:291px;" width="24" height="24" viewBox="-12 -12 24 24"><path d="M5.7 9.2C5.7 2 2 -3.6 -6.4 -4.9M-1.1 -8.4L-7 -5L-3.8 -0.1" fill="none" stroke="#c4c4c4" stroke-width="1.4" stroke-linecap="round" stroke-linejoin="round" transform="scale(-1,1)"/></svg><div class="b" style="left:1452px;top:321.5px;width:263px;height:94px;background:#282828;border-radius:0 0 5px 5px;"></div><span class="t" style="left:1461.5px;top:331.98px;font-size:13.5px;line-height:18px;color:#e4e4e4;-webkit-text-stroke:0.3px;letter-spacing:0.48px;">Integration Time</span><div class="b" style="left:1461.5px;top:348.06px;width:104px;height:1px;background:repeating-linear-gradient(90deg,#a8a8a8 0 1.3px,transparent 1.3px 3px);"></div><div class="b" style="left:1598px;top:331.7px;width:45.5px;height:18.5px;background:#282828;border-radius:3px;border:1px solid #5e5e5e;"></div><div class="b" style="left:1627px;top:332.7px;width:1px;height:16.5px;background:#5e5e5e;"></div><span class="t" style="left:1602.5px;top:331.93px;font-size:13.5px;line-height:18px;color:#f0f0f0;-webkit-text-stroke:0.25px;letter-spacing:1px;">ms</span><svg class="b" style="left:1627.3px;top:333.35px;" width="16" height="16" viewBox="-8 -8 16 16"><path d="M-3.5 -1.7L0 1.7L3.5 -1.7" stroke="#d0d0d0" stroke-width="1.15" fill="none" stroke-linecap="round" stroke-linejoin="round"/></svg><div class="b" style="left:1648.5px;top:331.7px;width:57.5px;height:18.5px;background:#282828;border-radius:3px;border:1px solid #5e5e5e;"></div><div class="b" style="left:1649.5px;top:332.7px;width:13.5px;height:16.5px;background:#282828;border-radius:2px 0 0 2px;border-right:1px solid #5e5e5e;"></div><svg class="b" style="left:1648.05px;top:332.95px;" width="16" height="16" viewBox="-8 -8 16 16"><path d="M-2.7 -2.25L0 -4.95L2.7 -2.25M-2.7 2.25L0 4.95L2.7 2.25" stroke="#d0d0d0" stroke-width="1.1" fill="none" stroke-linecap="round" stroke-linejoin="round"/></svg><span class="t" style="left:1670px;top:331.93px;font-size:13.5px;line-height:18px;color:#f0f0f0;-webkit-text-stroke:0.25px;letter-spacing:-0.82px;">1.050</span><span class="t" style="left:1461.5px;top:359.98px;font-size:13.5px;line-height:18px;color:#e4e4e4;-webkit-text-stroke:0.3px;letter-spacing:0.22px;">Averaging (samples)</span><div class="b" style="left:1461.5px;top:376.06px;width:127.5px;height:1px;background:repeating-linear-gradient(90deg,#a8a8a8 0 1.3px,transparent 1.3px 3px);"></div><div class="b" style="left:1648.5px;top:359.7px;width:57.5px;height:18.5px;background:#323232;border-radius:3px;border:1px solid #5e5e5e;"></div><div class="b" style="left:1649.5px;top:360.7px;width:13.5px;height:16.5px;background:#282828;border-radius:2px 0 0 2px;border-right:1px solid #5e5e5e;"></div><svg class="b" style="left:1648.05px;top:360.95px;" width="16" height="16" viewBox="-8 -8 16 16"><path d="M-2.7 -2.25L0 -4.95L2.7 -2.25M-2.7 2.25L0 4.95L2.7 2.25" stroke="#d0d0d0" stroke-width="1.1" fill="none" stroke-linecap="round" stroke-linejoin="round"/></svg><span class="t" style="left:1694.59px;top:359.93px;font-size:13.5px;line-height:18px;color:#f0f0f0;-webkit-text-stroke:0.25px;">1</span><span class="t" style="left:1461.5px;top:389.58px;font-size:13.5px;line-height:18px;color:#e4e4e4;-webkit-text-stroke:0.3px;letter-spacing:0.39px;">Measurements</span><span class="t" style="left:1694.85px;top:389.98px;font-size:12.5px;line-height:16px;color:#c4c4c4;">1</span><div class="b" style="left:1856px;top:-10px;width:2px;height:320px;background:#3c7bd2;"></div><div class="b" style="left:1852px;top:-10px;width:4px;height:320px;background:#181818;"></div><div class="b" style="left:1858px;top:-10px;width:200px;height:320px;background:#0f0f0f;"></div><div class="b" style="left:1861px;top:-60px;width:263px;height:146px;background:#282828;border-radius:5px;"></div><span class="t" style="left:1870.5px;top:3.68px;font-size:13.5px;line-height:18px;color:#e4e4e4;-webkit-text-stroke:0.3px;letter-spacing:0.48px;">Integration Time</span><div class="b" style="left:1870.5px;top:19.76px;width:104px;height:1px;background:repeating-linear-gradient(90deg,#a8a8a8 0 1.3px,transparent 1.3px 3px);"></div><div class="b" style="left:2007px;top:3.4px;width:45.5px;height:18.5px;background:#282828;border-radius:3px;border:1px solid #5e5e5e;"></div><div class="b" style="left:2036px;top:4.4px;width:1px;height:16.5px;background:#5e5e5e;"></div><span class="t" style="left:2011.5px;top:3.63px;font-size:13.5px;line-height:18px;color:#f0f0f0;-webkit-text-stroke:0.25px;letter-spacing:1px;">ms</span><svg class="b" style="left:2036.3px;top:5.05px;" width="16" height="16" viewBox="-8 -8 16 16"><path d="M-3.5 -1.7L0 1.7L3.5 -1.7" stroke="#d0d0d0" stroke-width="1.15" fill="none" stroke-linecap="round" stroke-linejoin="round"/></svg><div class="b" style="left:2057.5px;top:3.4px;width:57.5px;height:18.5px;background:#282828;border-radius:3px;border:1px solid #5e5e5e;"></div><div class="b" style="left:2058.5px;top:4.4px;width:13.5px;height:16.5px;background:#282828;border-radius:2px 0 0 2px;border-right:1px solid #5e5e5e;"></div><svg class="b" style="left:2057.05px;top:4.65px;" width="16" height="16" viewBox="-8 -8 16 16"><path d="M-2.7 -2.25L0 -4.95L2.7 -2.25M-2.7 2.25L0 4.95L2.7 2.25" stroke="#d0d0d0" stroke-width="1.1" fill="none" stroke-linecap="round" stroke-linejoin="round"/></svg><span class="t" style="left:2079px;top:3.63px;font-size:13.5px;line-height:18px;color:#f0f0f0;-webkit-text-stroke:0.25px;letter-spacing:-0.82px;">1.050</span><span class="t" style="left:1870.5px;top:31.68px;font-size:13.5px;line-height:18px;color:#e4e4e4;-webkit-text-stroke:0.3px;letter-spacing:0.22px;">Averaging (samples)</span><div class="b" style="left:1870.5px;top:47.76px;width:127.5px;height:1px;background:repeating-linear-gradient(90deg,#a8a8a8 0 1.3px,transparent 1.3px 3px);"></div><div class="b" style="left:2057.5px;top:31.4px;width:57.5px;height:18.5px;background:#323232;border-radius:3px;border:1px solid #5e5e5e;"></div><div class="b" style="left:2058.5px;top:32.4px;width:13.5px;height:16.5px;background:#282828;border-radius:2px 0 0 2px;border-right:1px solid #5e5e5e;"></div><svg class="b" style="left:2057.05px;top:32.65px;" width="16" height="16" viewBox="-8 -8 16 16"><path d="M-2.7 -2.25L0 -4.95L2.7 -2.25M-2.7 2.25L0 4.95L2.7 2.25" stroke="#d0d0d0" stroke-width="1.1" fill="none" stroke-linecap="round" stroke-linejoin="round"/></svg><span class="t" style="left:2103.59px;top:31.63px;font-size:13.5px;line-height:18px;color:#f0f0f0;-webkit-text-stroke:0.25px;">1</span><span class="t" style="left:1870.5px;top:61.28px;font-size:13.5px;line-height:18px;color:#e4e4e4;-webkit-text-stroke:0.3px;letter-spacing:0.39px;">Measurements</span><span class="t" style="left:2103.85px;top:61.68px;font-size:12.5px;line-height:16px;color:#c4c4c4;">1</span><div class="b" style="left:1861px;top:91.5px;width:263px;height:140.5px;background:#22395e;border-radius:5px;"></div><div class="b" style="left:1861px;top:237px;width:263px;height:47px;background:#141414;border-radius:4px 4px 0 0;"></div><svg class="b" style="left:1866.4px;top:248.5px;" width="24" height="24" viewBox="-12 -12 24 24"><circle r="8.2" fill="#5c5c5c"/><path d="M-2.3 -3.1A3.9 3.9 0 1 0 2.3 -3.1M0 -4.6V-0.4" fill="none" stroke="#1a1a1a" stroke-width="1.3" stroke-linecap="round"/></svg><span class="t" style="left:1892px;top:251.98px;font-size:13.5px;line-height:18px;color:#eaeaea;font-weight:700;letter-spacing:0.09px;">Spectrometer</span><svg class="b" style="left:2088.9px;top:248.7px;" width="24" height="24" viewBox="-12 -12 24 24"><path d="M-8 -4.25H8M-8 0H8M-8 4.25H8" stroke="#f0f0f0" stroke-width="1.6" fill="none"/></svg><div class="b" style="left:1861px;top:284px;width:263px;height:37.5px;background:#1f1f1f;"></div><svg class="b" style="left:1863px;top:291px;" width="24" height="24" viewBox="-12 -12 24 24"><circle r="2.35" fill="none" stroke="#c4c4c4" stroke-width="1.15"/><path d="M5.2 0L7.8 0M3.68 3.68L5.52 5.52M0 5.2L0 7.8M-3.68 3.68L-5.52 5.52M-5.2 0L-7.8 0M-3.68 -3.68L-5.52 -5.52M0 -5.2L0 -7.8M3.68 -3.68L5.52 -5.52" stroke="#c4c4c4" stroke-width="1.25" stroke-linecap="butt" fill="none"/></svg><svg class="b" style="left:1895.6px;top:291px;" width="24" height="24" viewBox="-12 -12 24 24"><path d="M-4.5 -7.3C1.6 -7.3 5.3 -4 5.3 0C5.3 4 1.6 7.3 -4.5 7.3C-0.4 5.7 1.5 3 1.5 0C1.5 -3 -0.4 -5.7 -4.5 -7.3Z" fill="none" stroke="#c4c4c4" stroke-width="1.15" stroke-linejoin="round"/></svg><svg class="b" style="left:1930px;top:291px;" width="24" height="24" viewBox="-12 -12 24 24"><path d="M-7.4 0.4A7.4 7.4 0 1 1 -0.9 7.34M-9.9 -2.3L-7.4 0.6L-4.8 -2.1" fill="none" stroke="#c4c4c4" stroke-width="1.15" stroke-linecap="round" stroke-linejoin="round"/><circle r="1.9" fill="none" stroke="#c4c4c4" stroke-width="1.15"/></svg><svg class="b" style="left:1961.9px;top:291px;" width="24" height="24" viewBox="-12 -12 24 24"><path d="M5.83 -1.4L7.73 -1.04L7.73 1.04L5.83 1.4L5.12 3.13L6.2 4.73L4.73 6.2L3.13 5.12L1.4 5.83L1.04 7.73L-1.04 7.73L-1.4 5.83L-3.13 5.12L-4.73 6.2L-6.2 4.73L-5.12 3.13L-5.83 1.4L-7.73 1.04L-7.73 -1.04L-5.83 -1.4L-5.12 -3.13L-6.2 -4.73L-4.73 -6.2L-3.13 -5.12L-1.4 -5.83L-1.04 -7.73L1.04 -7.73L1.4 -5.83L3.13 -5.12L4.73 -6.2L6.2 -4.73L5.12 -3.13Z" fill="none" stroke="#c4c4c4" stroke-width="1.15" stroke-linejoin="round" transform="rotate(22.5)"/><circle r="3" fill="none" stroke="#c4c4c4" stroke-width="1.15"/></svg><div class="b" style="left:2063px;top:289px;width:28px;height:28px;background:#343434;border-radius:4.5px;border:1px solid #606060;"></div><svg class="b" style="left:2065px;top:291px;" width="24" height="24" viewBox="-12 -12 24 24"><path d="M5.7 9.2C5.7 2 2 -3.6 -6.4 -4.9M-1.1 -8.4L-7 -5L-3.8 -0.1" fill="none" stroke="#c4c4c4" stroke-width="1.4" stroke-linecap="round" stroke-linejoin="round"/></svg><div class="b" style="left:2095.5px;top:289px;width:28px;height:28px;background:#343434;border-radius:4.5px;border:1px solid #606060;"></div><svg class="b" style="left:2097.5px;top:291px;" width="24" height="24" viewBox="-12 -12 24 24"><path d="M5.7 9.2C5.7 2 2 -3.6 -6.4 -4.9M-1.1 -8.4L-7 -5L-3.8 -0.1" fill="none" stroke="#c4c4c4" stroke-width="1.4" stroke-linecap="round" stroke-linejoin="round" transform="scale(-1,1)"/></svg><div class="b" style="left:1861px;top:321.5px;width:263px;height:94px;background:#282828;border-radius:0 0 5px 5px;"></div><span class="t" style="left:1870.5px;top:331.98px;font-size:13.5px;line-height:18px;color:#e4e4e4;-webkit-text-stroke:0.3px;letter-spacing:0.48px;">Integration Time</span><div class="b" style="left:1870.5px;top:348.06px;width:104px;height:1px;background:repeating-linear-gradient(90deg,#a8a8a8 0 1.3px,transparent 1.3px 3px);"></div><div class="b" style="left:2007px;top:331.7px;width:45.5px;height:18.5px;background:#282828;border-radius:3px;border:1px solid #5e5e5e;"></div><div class="b" style="left:2036px;top:332.7px;width:1px;height:16.5px;background:#5e5e5e;"></div><span class="t" style="left:2011.5px;top:331.93px;font-size:13.5px;line-height:18px;color:#f0f0f0;-webkit-text-stroke:0.25px;letter-spacing:1px;">ms</span><svg class="b" style="left:2036.3px;top:333.35px;" width="16" height="16" viewBox="-8 -8 16 16"><path d="M-3.5 -1.7L0 1.7L3.5 -1.7" stroke="#d0d0d0" stroke-width="1.15" fill="none" stroke-linecap="round" stroke-linejoin="round"/></svg><div class="b" style="left:2057.5px;top:331.7px;width:57.5px;height:18.5px;background:#282828;border-radius:3px;border:1px solid #5e5e5e;"></div><div class="b" style="left:2058.5px;top:332.7px;width:13.5px;height:16.5px;background:#282828;border-radius:2px 0 0 2px;border-right:1px solid #5e5e5e;"></div><svg class="b" style="left:2057.05px;top:332.95px;" width="16" height="16" viewBox="-8 -8 16 16"><path d="M-2.7 -2.25L0 -4.95L2.7 -2.25M-2.7 2.25L0 4.95L2.7 2.25" stroke="#d0d0d0" stroke-width="1.1" fill="none" stroke-linecap="round" stroke-linejoin="round"/></svg><span class="t" style="left:2079px;top:331.93px;font-size:13.5px;line-height:18px;color:#f0f0f0;-webkit-text-stroke:0.25px;letter-spacing:-0.82px;">1.050</span><span class="t" style="left:1870.5px;top:359.98px;font-size:13.5px;line-height:18px;color:#e4e4e4;-webkit-text-stroke:0.3px;letter-spacing:0.22px;">Averaging (samples)</span><div class="b" style="left:1870.5px;top:376.06px;width:127.5px;height:1px;background:repeating-linear-gradient(90deg,#a8a8a8 0 1.3px,transparent 1.3px 3px);"></div><div class="b" style="left:2057.5px;top:359.7px;width:57.5px;height:18.5px;background:#323232;border-radius:3px;border:1px solid #5e5e5e;"></div><div class="b" style="left:2058.5px;top:360.7px;width:13.5px;height:16.5px;background:#282828;border-radius:2px 0 0 2px;border-right:1px solid #5e5e5e;"></div><svg class="b" style="left:2057.05px;top:360.95px;" width="16" height="16" viewBox="-8 -8 16 16"><path d="M-2.7 -2.25L0 -4.95L2.7 -2.25M-2.7 2.25L0 4.95L2.7 2.25" stroke="#d0d0d0" stroke-width="1.1" fill="none" stroke-linecap="round" stroke-linejoin="round"/></svg><span class="t" style="left:2103.59px;top:359.93px;font-size:13.5px;line-height:18px;color:#f0f0f0;-webkit-text-stroke:0.25px;">1</span><span class="t" style="left:1870.5px;top:389.58px;font-size:13.5px;line-height:18px;color:#e4e4e4;-webkit-text-stroke:0.3px;letter-spacing:0.39px;">Measurements</span><span class="t" style="left:2103.85px;top:389.98px;font-size:12.5px;line-height:16px;color:#c4c4c4;">1</span><div class="b" style="left:1881.5px;top:-60px;width:300px;height:115px;background:#282828;border-radius:5px;"></div><span class="t" style="left:1891.3px;top:-28.32px;font-size:13.5px;line-height:18px;color:#e4e4e4;-webkit-text-stroke:0.3px;letter-spacing:0.48px;">Integration Time</span><div class="b" style="left:1891.3px;top:-12.24px;width:104px;height:1px;background:repeating-linear-gradient(90deg,#a8a8a8 0 1.3px,transparent 1.3px 3px);"></div><div class="b" style="left:2047.8px;top:-28.6px;width:45.5px;height:18.5px;background:#282828;border-radius:3px;border:1px solid #5e5e5e;"></div><div class="b" style="left:2076.8px;top:-27.6px;width:1px;height:16.5px;background:#5e5e5e;"></div><span class="t" style="left:2052.3px;top:-28.37px;font-size:13.5px;line-height:18px;color:#f0f0f0;-webkit-text-stroke:0.25px;letter-spacing:1px;">ms</span><svg class="b" style="left:2077.1px;top:-26.95px;" width="16" height="16" viewBox="-8 -8 16 16"><path d="M-3.5 -1.7L0 1.7L3.5 -1.7" stroke="#d0d0d0" stroke-width="1.15" fill="none" stroke-linecap="round" stroke-linejoin="round"/></svg><div class="b" style="left:2098.3px;top:-28.6px;width:57.5px;height:18.5px;background:#282828;border-radius:3px;border:1px solid #5e5e5e;"></div><div class="b" style="left:2099.3px;top:-27.6px;width:13.5px;height:16.5px;background:#282828;border-radius:2px 0 0 2px;border-right:1px solid #5e5e5e;"></div><svg class="b" style="left:2097.85px;top:-27.35px;" width="16" height="16" viewBox="-8 -8 16 16"><path d="M-2.7 -2.25L0 -4.95L2.7 -2.25M-2.7 2.25L0 4.95L2.7 2.25" stroke="#d0d0d0" stroke-width="1.1" fill="none" stroke-linecap="round" stroke-linejoin="round"/></svg><span class="t" style="left:2119.8px;top:-28.37px;font-size:13.5px;line-height:18px;color:#f0f0f0;-webkit-text-stroke:0.25px;letter-spacing:-0.82px;">1.050</span><span class="t" style="left:1891.3px;top:-0.32px;font-size:13.5px;line-height:18px;color:#e4e4e4;-webkit-text-stroke:0.3px;letter-spacing:0.22px;">Averaging (samples)</span><div class="b" style="left:1891.3px;top:15.76px;width:127.5px;height:1px;background:repeating-linear-gradient(90deg,#a8a8a8 0 1.3px,transparent 1.3px 3px);"></div><div class="b" style="left:2098.3px;top:-0.6px;width:57.5px;height:18.5px;background:#323232;border-radius:3px;border:1px solid #5e5e5e;"></div><div class="b" style="left:2099.3px;top:0.4px;width:13.5px;height:16.5px;background:#282828;border-radius:2px 0 0 2px;border-right:1px solid #5e5e5e;"></div><svg class="b" style="left:2097.85px;top:0.65px;" width="16" height="16" viewBox="-8 -8 16 16"><path d="M-2.7 -2.25L0 -4.95L2.7 -2.25M-2.7 2.25L0 4.95L2.7 2.25" stroke="#d0d0d0" stroke-width="1.1" fill="none" stroke-linecap="round" stroke-linejoin="round"/></svg><span class="t" style="left:2144.39px;top:-0.37px;font-size:13.5px;line-height:18px;color:#f0f0f0;-webkit-text-stroke:0.25px;">1</span><span class="t" style="left:1891.3px;top:29.28px;font-size:13.5px;line-height:18px;color:#e4e4e4;-webkit-text-stroke:0.3px;letter-spacing:0.39px;">Measurements</span><span class="t" style="left:2144.65px;top:29.68px;font-size:12.5px;line-height:16px;color:#c4c4c4;">1</span><svg class="b" style="left:1880.6px;top:-60px;" width="300" height="116.3" viewBox="0 0 300 116.3"><rect x="0.68" y="0.68" width="298.65" height="114.95" rx="4.5" fill="none" stroke="#4a8fe6" stroke-width="1.35" stroke-dasharray="3 2.2"/></svg></div></div><div class="p" style="left:1005.5px;top:320px;width:1024.5px;height:685.5px;background:#242424;box-shadow:0 0 0 2px #0658aa,0 0 0 4px #0a5aab,0 0 0 6px #0f5cab,0 0 0 8px #155eac,0 0 0 10px #1a60ad;"><div class="c" style="left:-1005.5px;top:-320px;"><div class="b" style="left:1006px;top:533.5px;width:974px;height:426px;background:#0a0a0a;border-radius:0 12px 12px 0;"></div><div class="b" style="left:1041px;top:599px;width:583.5px;height:294.5px;background:#1f1f1f;border-radius:6px;"></div><div class="b" style="left:1629px;top:599px;width:310px;height:294.5px;background:#141414;"></div><div class="b" style="left:1093px;top:649px;width:207px;height:195px;background:#2a2a2a;border-radius:4px;"></div><div class="b" style="left:1093px;top:786px;width:207px;height:1px;background:#3c3c3c;"></div><span class="t" style="left:1109.5px;top:668.47px;font-size:17.5px;line-height:23px;color:#fff;font-weight:700;letter-spacing:0.55px;">Spectrum3D</span><span class="t" style="left:1109.5px;top:703.28px;font-size:13.5px;line-height:18px;color:#d6d6d6;letter-spacing:0.01px;">Visualize spectra in three</span><span class="t" style="left:1109.5px;top:719.78px;font-size:13.5px;line-height:18px;color:#d6d6d6;letter-spacing:0.17px;">dimensions.</span><div class="b" style="left:1109.5px;top:803px;width:49.5px;height:24.5px;background:#5a5a5a;border-radius:12.25px;"></div><div class="b" style="left:1112px;top:805.5px;width:19.5px;height:19.5px;background:#262626;border-radius:24.5px;border:1.2px solid #bdbdbd;"></div><svg class="b" style="left:1261px;top:803px;" width="24" height="24" viewBox="-12 -12 24 24"><circle r="10.6" fill="#fff"/><circle cx="0.3" cy="-4.6" r="1.45" fill="#1a1a1a"/><path d="M-2.6 -1.7H1.4V4.1H3.1V5.9H-3V4.1H-0.9V0.1H-2.6Z" fill="#1a1a1a"/></svg><div class="b" style="left:1366px;top:649px;width:207px;height:195px;background:#2a2a2a;border-radius:4px;"></div><div class="b" style="left:1366px;top:786px;width:207px;height:1px;background:#3c3c3c;"></div><span class="t" style="left:1382.5px;top:668.47px;font-size:17.5px;line-height:23px;color:#fff;font-weight:700;letter-spacing:0.55px;">Spectrum3D</span><span class="t" style="left:1382.5px;top:703.28px;font-size:13.5px;line-height:18px;color:#d6d6d6;letter-spacing:0.01px;">Visualize spectra in three</span><span class="t" style="left:1382.5px;top:719.78px;font-size:13.5px;line-height:18px;color:#d6d6d6;letter-spacing:0.17px;">dimensions.</span><div class="b" style="left:1382.5px;top:803px;width:49.5px;height:24.5px;background:#dcdcdc;border-radius:12.25px;"></div><div class="b" style="left:1410px;top:805.5px;width:19.5px;height:19.5px;background:#262626;border-radius:24.5px;"></div><svg class="b" style="left:1534px;top:803px;" width="24" height="24" viewBox="-12 -12 24 24"><circle r="10.6" fill="#fff"/><circle cx="0.3" cy="-4.6" r="1.45" fill="#1a1a1a"/><path d="M-2.6 -1.7H1.4V4.1H3.1V5.9H-3V4.1H-0.9V0.1H-2.6Z" fill="#1a1a1a"/></svg><div class="b" style="left:1680px;top:649px;width:207px;height:195px;background:#2a2a2a;border-radius:4px;"></div><div class="b" style="left:1680px;top:786px;width:207px;height:1px;background:#3c3c3c;"></div><span class="t" style="left:1696.5px;top:668.47px;font-size:17.5px;line-height:23px;color:#fff;font-weight:700;letter-spacing:0.55px;">Spectrum3D</span><span class="t" style="left:1696.5px;top:703.28px;font-size:13.5px;line-height:18px;color:#d6d6d6;letter-spacing:0.01px;">Visualize spectra in three</span><span class="t" style="left:1696.5px;top:719.78px;font-size:13.5px;line-height:18px;color:#d6d6d6;letter-spacing:0.17px;">dimensions.</span><div class="b" style="left:1696.5px;top:803px;width:49.5px;height:24.5px;background:#dcdcdc;border-radius:12.25px;"></div><div class="b" style="left:1724px;top:805.5px;width:19.5px;height:19.5px;background:#262626;border-radius:24.5px;"></div><svg class="b" style="left:1848px;top:803px;" width="24" height="24" viewBox="-12 -12 24 24"><circle r="10.6" fill="#fff"/><circle cx="0.3" cy="-4.6" r="1.45" fill="#1a1a1a"/><path d="M-2.6 -1.7H1.4V4.1H3.1V5.9H-3V4.1H-0.9V0.1H-2.6Z" fill="#1a1a1a"/></svg><div class="b" style="left:1884px;top:803px;width:120px;height:29px;background:#333;border-radius:3px;"></div><svg class="b" style="left:1877px;top:811px;" width="8" height="12" viewBox="0 0 8 12"><path d="M8 0L0.5 6L8 12Z" fill="#333"/></svg><span class="t" style="left:1896.5px;top:808.48px;font-size:13.5px;line-height:18px;color:#d0d0d0;letter-spacing:-0.33px;">Tooltip description</span><span class="t" style="left:1079.2px;top:385.48px;font-size:13px;line-height:17px;color:#fff;font-weight:700;letter-spacing:-0.19px;">Background 4</span><span class="t" style="left:1053.5px;top:408.48px;font-size:13px;line-height:17px;color:#e6e6e6;letter-spacing:0.14px;">Overall full background</span><div class="b" style="left:1121px;top:448px;width:1px;height:113px;background:#e6e6e6;"></div><div class="b" style="left:1118.5px;top:558px;width:6px;height:6px;background:#fff;border-radius:3px;"></div><span class="t" style="left:1290px;top:385.48px;font-size:13px;line-height:17px;color:#fff;font-weight:700;letter-spacing:-0.24px;">Background 2</span><span class="t" style="left:1251.15px;top:408.48px;font-size:13px;line-height:17px;color:#e6e6e6;letter-spacing:0.21px;">Primary content sits on this</span><div class="b" style="left:1332px;top:448px;width:1px;height:191.5px;background:#e6e6e6;"></div><div class="b" style="left:1329.5px;top:636.5px;width:6px;height:6px;background:#fff;border-radius:3px;"></div><span class="t" style="left:1448.65px;top:363.98px;font-size:13px;line-height:17px;color:#fff;font-weight:700;letter-spacing:-0.36px;">Background 1</span><span class="t" style="left:1443.25px;top:386.98px;font-size:13px;line-height:17px;color:#e6e6e6;letter-spacing:0.18px;">Primary content</span><div class="b" style="left:1490px;top:426.5px;width:1px;height:234.5px;background:#e6e6e6;"></div><div class="b" style="left:1487.5px;top:658px;width:6px;height:6px;background:#fff;border-radius:3px;"></div><span class="t" style="left:1647.65px;top:363.98px;font-size:13px;line-height:17px;color:#fff;font-weight:700;letter-spacing:-0.18px;">Background 3</span><span class="t" style="left:1605.1px;top:386.98px;font-size:13px;line-height:17px;color:#e6e6e6;letter-spacing:0.14px;">Mostly nav &amp; header/app bar</span><div class="b" style="left:1690px;top:426.5px;width:1px;height:199.5px;background:#e6e6e6;"></div><div class="b" style="left:1687.5px;top:623px;width:6px;height:6px;background:#fff;border-radius:3px;"></div><span class="t" style="left:1895.8px;top:363.98px;font-size:13px;line-height:17px;color:#fff;font-weight:700;">Static</span><span class="t" style="left:1867px;top:386.98px;font-size:13px;line-height:17px;color:#e6e6e6;letter-spacing:0.24px;">Tooltip/Popover</span><div class="b" style="left:1913px;top:426.5px;width:1px;height:377px;background:#e6e6e6;"></div><div class="b" style="left:1910.5px;top:800.5px;width:6px;height:6px;background:#fff;border-radius:3px;"></div></div></div><div class="p" style="left:1005.5px;top:1039.5px;width:1024.5px;height:450.5px;background:#0a0a0a;box-shadow:0 0 0 2px #0658aa,0 0 0 4px #0a5aab,0 0 0 6px #0f5cab,0 0 0 8px #155eac,0 0 0 10px #1a60ad;"><div class="c" style="left:-1005.5px;top:-1039.5px;"><span class="t" style="left:1077px;top:1062.95px;font-size:31px;line-height:40px;color:#fff;font-weight:700;letter-spacing:-0.26px;">General Sans Variable</span><span class="t" style="left:1405.4px;top:1062.95px;font-size:31px;line-height:40px;color:#fff;font-weight:700;transform-origin:0 50%;transform:scaleX(0.7);">—</span><span class="t" style="left:1435.3px;top:1062.95px;font-size:31px;line-height:40px;color:#fff;font-weight:700;letter-spacing:0.26px;">typescale</span><span class="t" style="left:1098.5px;top:1166.46px;font-size:23.5px;line-height:31px;color:#fff;font-weight:700;letter-spacing:0.46px;">Name</span><span class="t" style="left:1453px;top:1166.46px;font-size:23.5px;line-height:31px;color:#fff;font-weight:700;letter-spacing:0.22px;">Weight</span><span class="t" style="left:1807.5px;top:1166.46px;font-size:23.5px;line-height:31px;color:#fff;font-weight:700;letter-spacing:0.54px;">Size/Line height</span><div class="b" style="left:1077px;top:1207px;width:1000px;height:2px;background:#888;"></div><span class="t" style="left:1098.5px;top:1229.47px;font-size:20.5px;line-height:27px;color:#d4d4d4;letter-spacing:0.31px;">Caption</span><span class="t" style="left:1098.5px;top:1294.97px;font-size:20.5px;line-height:27px;color:#f0f0f0;letter-spacing:0.48px;-webkit-text-stroke:0.35px #f0f0f0;">Caption Medium</span><span class="t" style="left:1098.5px;top:1361.47px;font-size:20px;line-height:26px;color:#fff;font-weight:700;letter-spacing:0.09px;">Caption Strong</span><div class="b" style="left:1077px;top:1407px;width:1000px;height:80px;background:#2a2a2a;"></div><span class="t" style="left:1098.5px;top:1425.46px;font-size:24px;line-height:31px;color:#d4d4d4;letter-spacing:-0.9px;">Body</span><span class="t" style="left:1453px;top:1226.96px;font-size:26px;line-height:34px;color:#f4f4f4;letter-spacing:-0.56px;">Regular</span><span class="t" style="left:1453px;top:1292.96px;font-size:26px;line-height:34px;color:#f4f4f4;letter-spacing:0.43px;">Medium</span><span class="t" style="left:1453px;top:1358.96px;font-size:26px;line-height:34px;color:#f4f4f4;letter-spacing:0.23px;">Semibold</span><span class="t" style="left:1453px;top:1424.96px;font-size:26px;line-height:34px;color:#f4f4f4;letter-spacing:-0.56px;">Regular</span><span class="t" style="left:1807.5px;top:1227.96px;font-size:25px;line-height:32px;color:#f4f4f4;letter-spacing:-1.12px;transform-origin:0 50%;transform:scaleX(0.9);">11/14</span><span class="t" style="left:1807.5px;top:1293.96px;font-size:25px;line-height:32px;color:#f4f4f4;letter-spacing:-1.12px;transform-origin:0 50%;transform:scaleX(0.9);">11/14</span><span class="t" style="left:1807.5px;top:1359.96px;font-size:25px;line-height:32px;color:#f4f4f4;letter-spacing:-1.12px;transform-origin:0 50%;transform:scaleX(0.9);">11/14</span><span class="t" style="left:1807.5px;top:1425.96px;font-size:25px;line-height:32px;color:#f4f4f4;letter-spacing:-0.09px;transform-origin:0 50%;transform:scaleX(0.9);">13/16</span></div></div></body></html>
